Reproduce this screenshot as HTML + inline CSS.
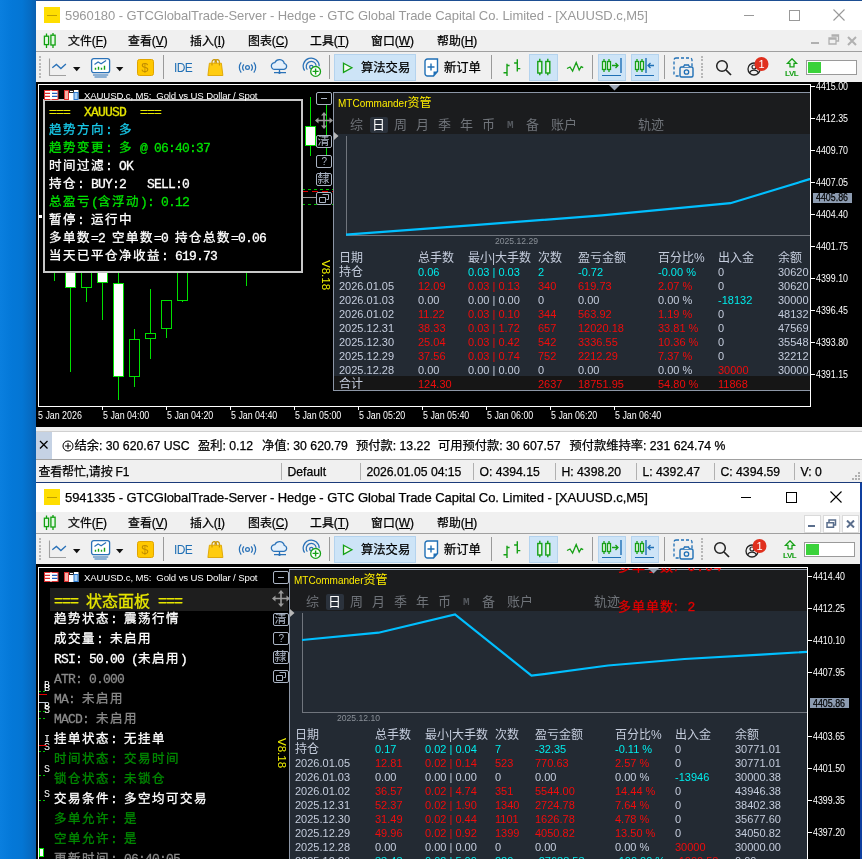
<!DOCTYPE html>
<html><head><meta charset="utf-8"><title>MT5</title>
<style>
html,body{margin:0;padding:0;background:#000;}
body{width:862px;height:859px;overflow:hidden;position:relative;}
#r{position:absolute;left:0;top:0;width:862px;height:859px;overflow:hidden;}
#r div,#r svg{position:absolute;box-sizing:content-box;}
#r span{position:static;}
.m span{line-height:0;}
#r{will-change:transform;}
.t{white-space:nowrap;}
.k{-webkit-text-stroke:0.25px currentColor;}
.m{-webkit-text-stroke:0.3px currentColor;}
.m{font-family:"Liberation Mono","Noto Sans CJK SC",monospace;}
.m .c{font-family:"Liberation Sans","Noto Sans CJK SC",sans-serif;}
.m .l{font-family:"Liberation Mono",monospace;}
u{text-decoration:underline;text-underline-offset:1px;}
</style></head><body><div id="r">
<div style="left:0;top:0;width:36px;height:859px;background:linear-gradient(90deg,#0a7fdf 0px,#0478d8 12px,#0476d4 22px,#066cc4 30px,#0a60b0 36px)"></div>
<div style="left:36px;top:0px;width:826px;height:1px;background:#1d4e92;"></div>
<div style="left:36px;top:1px;width:826px;height:29px;background:#fff;"></div>
<div style="left:44px;top:7px;width:16px;height:16px;background:#ffde00;"></div>
<div style="left:47px;top:14.5px;width:10px;height:1px;background:#c0a000;"></div>
<div class="t" style="left:65px;top:6.5px;height:18px;line-height:18px;font-size:13px;color:#999;font-family:'Liberation Sans','Noto Sans CJK SC',sans-serif;letter-spacing:-0.06px;">5960180 - GTCGlobalTrade-Server - Hedge - GTC Global Trade Capital Co. Limited - [XAUUSD.c,M5]</div>
<svg style="left:743px;top:9px" width="60" height="14"></svg>
<div style="left:744px;top:15px;width:10px;height:1px;background:#999;"></div>
<div style="left:789px;top:10px;width:9px;height:9px;border:1px solid #999"></div>
<svg style="left:833px;top:9px" width="12" height="12"><path d="M0.5 0.5L11.5 11.5M11.5 0.5L0.5 11.5" stroke="#999" stroke-width="1.1" fill="none"/></svg>
<div style="left:36px;top:30px;width:826px;height:22px;background:#f0f0f0;"></div>
<div style="left:36px;top:51px;width:826px;height:1px;background:#a0a0a0;"></div>
<svg style="left:41px;top:33px" width="18" height="16"><g stroke="#10a010" fill="#e4f8e4" stroke-width="1.3"><path d="M5.5 0.5v14.5M12 0v15" fill="none"/><rect x="3.4" y="3.2" width="4.2" height="8.4"/><rect x="9.9" y="2.2" width="4.2" height="9.8"/></g></svg>
<div class="t k" style="left:68px;top:32.5px;height:17px;line-height:17px;font-size:11.9px;color:#000;font-family:'Liberation Sans','Noto Sans CJK SC',sans-serif;">文件(<u>F</u>)</div>
<div class="t k" style="left:128px;top:32.5px;height:17px;line-height:17px;font-size:11.9px;color:#000;font-family:'Liberation Sans','Noto Sans CJK SC',sans-serif;">查看(<u>V</u>)</div>
<div class="t k" style="left:190px;top:32.5px;height:17px;line-height:17px;font-size:11.9px;color:#000;font-family:'Liberation Sans','Noto Sans CJK SC',sans-serif;">插入(<u>I</u>)</div>
<div class="t k" style="left:248px;top:32.5px;height:17px;line-height:17px;font-size:11.9px;color:#000;font-family:'Liberation Sans','Noto Sans CJK SC',sans-serif;">图表(<u>C</u>)</div>
<div class="t k" style="left:310px;top:32.5px;height:17px;line-height:17px;font-size:11.9px;color:#000;font-family:'Liberation Sans','Noto Sans CJK SC',sans-serif;">工具(<u>T</u>)</div>
<div class="t k" style="left:371px;top:32.5px;height:17px;line-height:17px;font-size:11.9px;color:#000;font-family:'Liberation Sans','Noto Sans CJK SC',sans-serif;">窗口(<u>W</u>)</div>
<div class="t k" style="left:437px;top:32.5px;height:17px;line-height:17px;font-size:11.9px;color:#000;font-family:'Liberation Sans','Noto Sans CJK SC',sans-serif;">帮助(<u>H</u>)</div>
<div style="left:811px;top:42px;width:8px;height:2px;background:#b0b0b0;"></div>
<svg style="left:828px;top:34px" width="12" height="12"><path d="M3.5 1h7v6h-2M1 4h7v6h-7z M1 5h7 M3.5 2h7" stroke="#b0b0b0" stroke-width="1.3" fill="none"/></svg>
<svg style="left:847px;top:36px" width="10" height="10"><path d="M1 1L9 9M9 1L1 9" stroke="#b0b0b0" stroke-width="2" fill="none"/></svg>
<div style="left:36px;top:52px;width:826px;height:30px;background:#f0f0f0;"></div>
<div style="left:39px;top:56.0px;width:2px;height:2px;background:#b8b8b8;"></div>
<div style="left:39px;top:59.3px;width:2px;height:2px;background:#b8b8b8;"></div>
<div style="left:39px;top:62.6px;width:2px;height:2px;background:#b8b8b8;"></div>
<div style="left:39px;top:65.9px;width:2px;height:2px;background:#b8b8b8;"></div>
<div style="left:39px;top:69.2px;width:2px;height:2px;background:#b8b8b8;"></div>
<div style="left:39px;top:72.5px;width:2px;height:2px;background:#b8b8b8;"></div>
<div style="left:39px;top:75.8px;width:2px;height:2px;background:#b8b8b8;"></div>
<svg style="left:48px;top:57px" width="22" height="21"><path d="M1.5 1.5v17h16.5" stroke="#a0a0a0" stroke-width="1.1" fill="none"/><path d="M4.3 10.8l4.1-3.4 4.5 4.2 5-4.6" stroke="#2a72b8" stroke-width="1.3" fill="none"/></svg>
<svg style="left:73px;top:66.5px" width="8" height="5"><path d="M0 0h7.4l-3.7 4.2z" fill="#111"/></svg>
<svg style="left:90px;top:57px" width="22" height="21"><rect x="1.6" y="1.6" width="18" height="14" rx="2.2" fill="#fff" stroke="#2a72b8" stroke-width="1.3"/><path d="M3 18h15.2M4.5 20h12.2" stroke="#2a72b8" stroke-width="1.1"/><path d="M4.5 7.6l3.6-2.6 3 1.8 5-3.2" stroke="#2a72b8" stroke-width="1.2" fill="none"/><path d="M5.5 12.8v-2M8.5 12.8v-3M11.5 12.8v-2M14.5 12.8v-4" stroke="#16a016" stroke-width="1.4"/></svg>
<svg style="left:116px;top:66.5px" width="8" height="5"><path d="M0 0h7.4l-3.7 4.2z" fill="#111"/></svg>
<div style="left:137px;top:59px;width:15px;height:15px;background:#ffc800;border:1px solid #e0a400;border-radius:2.5px"></div>
<div class="t" style="left:141.2px;top:58.8px;height:18px;line-height:18px;font-size:13px;color:#c08c00;font-family:'Liberation Sans','Noto Sans CJK SC',sans-serif;">$</div>
<div style="left:163px;top:55px;width:1px;height:24px;background:#9a9a9a;"></div>
<div class="t" style="left:174px;top:59.5px;height:17px;line-height:17px;font-size:12px;color:#1f6fb5;font-family:'Liberation Sans','Noto Sans CJK SC',sans-serif;letter-spacing:-0.6px;">IDE</div>
<svg style="left:206px;top:57px" width="20" height="20"><path d="M6 8.5V5.2a2.2 2.6 0 0 1 4.4 0v3M9 8.5V5.2a2.2 2.6 0 0 1 4.4 0v3" stroke="#c89400" stroke-width="1.1" fill="none"/><path d="M3.4 6.2h12l1.5 12.3h-15z" fill="#ffcc10" stroke="#dca400" stroke-width="0.9"/><path d="M6 6.5v2M13.4 6.5v2" stroke="#c89400" stroke-width="1.1"/></svg>
<svg style="left:237px;top:59px" width="22" height="16"><g stroke="#2a72b8" stroke-width="1.25" fill="none"><circle cx="10.5" cy="8.5" r="1.9"/><path d="M6.9 5.3a5 5 0 0 0 0 6.4M14.1 5.3a5 5 0 0 1 0 6.4M4.2 3.4a8 8 0 0 0 0 10.2M16.8 3.4a8 8 0 0 1 0 10.2"/></g></svg>
<svg style="left:269px;top:57px" width="22" height="20"><g stroke="#2a72b8" stroke-width="1.25" fill="#e4f0fb"><path d="M5.6 12.4a3.4 3.4 0 0 1 .3-6.8 5 5 0 0 1 9.4 .9 3 3 0 0 1 -.3 5.9z"/><path d="M10.5 12.4v3.3M5 15.7h12" fill="none"/></g><circle cx="10.5" cy="15.7" r="1.2" fill="#2a72b8"/></svg>
<svg style="left:301px;top:57px" width="23" height="22"><g stroke="#2a72b8" stroke-width="1.25" fill="none"><path d="M3.6 13.6a8 8 0 1 1 14.6-4.4"/><path d="M6.4 12.6a5 5 0 1 1 8.8-3.8"/><circle cx="10.3" cy="10" r="1.7"/></g><circle cx="14.6" cy="14.4" r="4.9" fill="#fff" stroke="#16a016" stroke-width="1.3"/><path d="M14.6 11.4v6M11.6 14.4h6" stroke="#16a016" stroke-width="1.4"/></svg>
<div style="left:329px;top:55px;width:1px;height:24px;background:#9a9a9a;"></div>
<div style="left:334px;top:54px;width:80px;height:25px;background:#cde4f7;border:1px solid #b4d3ee"></div>
<svg style="left:342px;top:62px" width="12" height="12"><path d="M1.5 1.2l8.4 4.6-8.4 4.6z" fill="#f4fbf4" stroke="#16a016" stroke-width="1.3"/></svg>
<div class="t k" style="left:361px;top:60.3px;height:17px;line-height:17px;font-size:12.3px;color:#000;font-family:'Liberation Sans','Noto Sans CJK SC',sans-serif;">算法交易</div>
<svg style="left:424px;top:58px" width="15" height="19"><path d="M3.5 1h10v12.5l-4 4.5h-6a2.5 2.5 0 0 1 -2.5-2.5v-12a2.5 2.5 0 0 1 2.5-2.5z" fill="#fff" stroke="#1f6fb5" stroke-width="1.4"/><path d="M13.5 13.5l-4 4.5v-4.5z" fill="#1f6fb5"/><path d="M7 5.5v7M3.5 9h7" stroke="#1f6fb5" stroke-width="1.4"/></svg>
<div class="t k" style="left:444px;top:60.3px;height:17px;line-height:17px;font-size:12.3px;color:#000;font-family:'Liberation Sans','Noto Sans CJK SC',sans-serif;">新订单</div>
<div style="left:491px;top:55px;width:1px;height:24px;background:#9a9a9a;"></div>
<svg style="left:502px;top:58px" width="20" height="20"><path d="M5 5.7v12.2M1.5 14.7h3.5M5 7.5h2.6M15.3 1.3v12.2M15.3 5h-3.2M15.3 10.6h3" stroke="#16a016" stroke-width="1.4" fill="none"/></svg>
<div style="left:529px;top:54px;width:27px;height:25px;background:#cde4f7;border:1px solid #b4d3ee"></div>
<svg style="left:534px;top:58px" width="18" height="18"><g stroke="#16a016" stroke-width="1.4" fill="#e8f8e8"><path d="M5.8 0.8v16.4M13.8 0.8v16.4" fill="none"/><rect x="3.8" y="3.5" width="4" height="11.5"/><rect x="11.8" y="3.5" width="4" height="11.5"/></g></svg>
<svg style="left:566px;top:61px" width="18" height="12"><path d="M1 7.5l3-1.5 2.6 4 3.6-8.5 3 7.5 2-3.3 2 1" stroke="#16a016" stroke-width="1.3" fill="none"/></svg>
<div style="left:592px;top:55px;width:1px;height:24px;background:#9a9a9a;"></div>
<div style="left:598px;top:54px;width:26px;height:25px;background:#cde4f7;border:1px solid #b4d3ee"></div>
<svg style="left:601px;top:58px" width="22" height="20"><g stroke="#16a016" stroke-width="1.3" fill="#e8f8e8"><path d="M3 1v13M8 1v13" fill="none"/><rect x="1.5" y="3.5" width="3" height="8"/><rect x="6.5" y="3.5" width="3" height="8"/></g><path d="M11 7.5h6M14.5 5l2.5 2.5-2.5 2.5" stroke="#16a016" stroke-width="1.3" fill="none"/><path d="M20 0v15" stroke="#1f6fb5" stroke-width="1.4"/><path d="M1 17.5h19" stroke="#1f6fb5" stroke-width="1"/></svg>
<div style="left:631px;top:54px;width:26px;height:25px;background:#cde4f7;border:1px solid #b4d3ee"></div>
<svg style="left:634px;top:58px" width="22" height="20"><g stroke="#16a016" stroke-width="1.3" fill="#e8f8e8"><path d="M3 1v13M8 1v13" fill="none"/><rect x="1.5" y="3.5" width="3" height="8"/><rect x="6.5" y="3.5" width="3" height="8"/></g><path d="M12 0v15" stroke="#1f6fb5" stroke-width="1.4"/><path d="M20 7.5h-6M16.5 5l-2.5 2.5 2.5 2.5" stroke="#1f6fb5" stroke-width="1.3" fill="none"/><path d="M1 17.5h19" stroke="#1f6fb5" stroke-width="1"/></svg>
<div style="left:664px;top:55px;width:1px;height:24px;background:#9a9a9a;"></div>
<svg style="left:673px;top:57px" width="22" height="22"><rect x="1" y="1" width="18" height="18" rx="2" fill="none" stroke="#1f6fb5" stroke-width="1.3" stroke-dasharray="3 2"/><rect x="7" y="10" width="13" height="10" rx="1.5" fill="#f0f0f0" stroke="#1f6fb5" stroke-width="1.4"/><path d="M10.5 10l1-2h4l1 2" stroke="#1f6fb5" stroke-width="1.3" fill="#f0f0f0"/><circle cx="13.5" cy="15" r="2.2" fill="none" stroke="#1f6fb5" stroke-width="1.3"/></svg>
<div style="left:701px;top:56.0px;width:2px;height:2px;background:#b8b8b8;"></div>
<div style="left:701px;top:59.3px;width:2px;height:2px;background:#b8b8b8;"></div>
<div style="left:701px;top:62.6px;width:2px;height:2px;background:#b8b8b8;"></div>
<div style="left:701px;top:65.9px;width:2px;height:2px;background:#b8b8b8;"></div>
<div style="left:701px;top:69.2px;width:2px;height:2px;background:#b8b8b8;"></div>
<div style="left:701px;top:72.5px;width:2px;height:2px;background:#b8b8b8;"></div>
<div style="left:701px;top:75.8px;width:2px;height:2px;background:#b8b8b8;"></div>
<svg style="left:715px;top:59px" width="18" height="18"><circle cx="7" cy="7" r="5.3" fill="none" stroke="#222" stroke-width="1.5"/><path d="M11 11l5 5" stroke="#222" stroke-width="1.7"/></svg>
<svg style="left:746px;top:57px" width="26" height="22"><circle cx="8" cy="12" r="6" fill="none" stroke="#222" stroke-width="1.3"/><circle cx="8" cy="10" r="2" fill="none" stroke="#222" stroke-width="1.2"/><path d="M3.5 16a5 5 0 0 1 9 0" fill="none" stroke="#222" stroke-width="1.2"/><circle cx="15.5" cy="7" r="7" fill="#e0301e"/></svg>
<div class="t" style="left:758.5px;top:56.5px;height:15px;line-height:15px;font-size:11px;color:#fff;font-family:'Liberation Sans','Noto Sans CJK SC',sans-serif;">1</div>
<svg style="left:785px;top:58px" width="14" height="10"><path d="M7 0.8l4.5 4.5h-2.5v3.5h-4v-3.5h-2.5z" fill="#e8f8e8" stroke="#16a016" stroke-width="1.3"/></svg>
<div class="t" style="left:785px;top:67.5px;height:11px;line-height:11px;font-size:8px;color:#16a016;font-family:'Liberation Sans','Noto Sans CJK SC',sans-serif;font-weight:bold;letter-spacing:-0.4px;">LVL</div>
<div style="left:806px;top:60px;width:49px;height:13px;background:#fff;border:1px solid #9a9a9a"></div>
<div style="left:808px;top:62px;width:13px;height:11px;background:#3ad23a;"></div>
<div style="left:36px;top:82px;width:826px;height:345px;background:#000;"></div>
<div style="left:38px;top:84px;width:773px;height:1px;background:#fff;"></div>
<div style="left:38px;top:84px;width:1px;height:323px;background:#fff;"></div>
<div style="left:38px;top:406px;width:773px;height:1px;background:#fff;"></div>
<div style="left:810px;top:84px;width:1px;height:323px;background:#fff;"></div>
<div style="left:39px;top:215px;width:3px;height:3px;background:#fff;"></div>
<div style="left:54px;top:272px;width:1px;height:9px;background:#00e000;"></div>
<div style="left:70px;top:250px;width:1px;height:122px;background:#00e000;"></div>
<div style="left:65px;top:250px;width:9px;height:36px;background:#fff;border:1px solid #00e000"></div>
<div style="left:86px;top:250px;width:1px;height:52px;background:#00e000;"></div>
<div style="left:81px;top:250px;width:9px;height:36px;background:#000;border:1px solid #00e000"></div>
<div style="left:102px;top:250px;width:1px;height:70px;background:#00e000;"></div>
<div style="left:97px;top:250px;width:9px;height:31px;background:#fff;border:1px solid #00e000"></div>
<div style="left:118px;top:265px;width:1px;height:135px;background:#00e000;"></div>
<div style="left:113px;top:283px;width:9px;height:92px;background:#fff;border:1px solid #00e000"></div>
<div style="left:134px;top:329px;width:1px;height:58px;background:#00e000;"></div>
<div style="left:129px;top:339px;width:9px;height:36px;background:#000;border:1px solid #00e000"></div>
<div style="left:150px;top:289px;width:1px;height:70px;background:#00e000;"></div>
<div style="left:145px;top:333px;width:9px;height:4px;background:#000;border:1px solid #00e000"></div>
<div style="left:166px;top:300px;width:1px;height:38px;background:#00e000;"></div>
<div style="left:161px;top:300px;width:9px;height:27px;background:#000;border:1px solid #00e000"></div>
<div style="left:182px;top:250px;width:1px;height:52px;background:#00e000;"></div>
<div style="left:177px;top:250px;width:9px;height:49px;background:#000;border:1px solid #00e000"></div>
<div style="left:246px;top:270px;width:1px;height:16px;background:#00e000;"></div>
<div style="left:310px;top:97px;width:1px;height:59px;background:#00e000;"></div>
<div style="left:305px;top:126px;width:9px;height:18px;background:#fff;border:1px solid #00e000"></div>
<div style="left:326px;top:97px;width:1px;height:58px;background:#00e000;"></div>
<svg style="left:302px;top:186px" width="32" height="22"><path d="M0 3.5h32M0 18.5h32" stroke="#00c000" stroke-dasharray="3 3"/><path d="M0 5.5h32" stroke="#e00000" stroke-dasharray="6 4"/><path d="M0 11.5h14" stroke="#9a9a9a"/></svg>
<div style="left:43px;top:99px;width:256px;height:170px;background:#000;border:2px solid #c8c8c8"></div>
<div class="t m" style="left:49px;top:104.0px;height:18px;line-height:18px;font-size:13px;color:#e6e600;"><span class="l" style="letter-spacing:-0.8px">===&nbsp;&nbsp;XAUUSD&nbsp;&nbsp;===</span></div>
<div class="t m" style="left:49px;top:122.0px;height:18px;line-height:18px;font-size:13px;color:#18c8e8;"><span class="c" style="font-size:12.5px;letter-spacing:1.5px">趋势方向</span><span class="l" style="letter-spacing:-0.8px">:&nbsp;</span><span class="c" style="font-size:12.5px;letter-spacing:1.5px">多</span></div>
<div class="t m" style="left:49px;top:140.0px;height:18px;line-height:18px;font-size:13px;color:#00e000;"><span class="c" style="font-size:12.5px;letter-spacing:1.5px">趋势变更</span><span class="l" style="letter-spacing:-0.8px">:&nbsp;</span><span class="c" style="font-size:12.5px;letter-spacing:1.5px">多</span><span class="l" style="letter-spacing:-0.8px">&nbsp;@&nbsp;06:40:37</span></div>
<div class="t m" style="left:49px;top:158.0px;height:18px;line-height:18px;font-size:13px;color:#fff;"><span class="c" style="font-size:12.5px;letter-spacing:1.5px">时间过滤</span><span class="l" style="letter-spacing:-0.8px">:&nbsp;OK</span></div>
<div class="t m" style="left:49px;top:176.0px;height:18px;line-height:18px;font-size:13px;color:#fff;"><span class="c" style="font-size:12.5px;letter-spacing:1.5px">持仓</span><span class="l" style="letter-spacing:-0.8px">:&nbsp;BUY:2&nbsp;&nbsp;&nbsp;SELL:0</span></div>
<div class="t m" style="left:49px;top:194.0px;height:18px;line-height:18px;font-size:13px;color:#00e000;"><span class="c" style="font-size:12.5px;letter-spacing:1.5px">总盈亏</span><span class="l" style="letter-spacing:-0.8px">(</span><span class="c" style="font-size:12.5px;letter-spacing:1.5px">含浮动</span><span class="l" style="letter-spacing:-0.8px">):&nbsp;0.12</span></div>
<div class="t m" style="left:49px;top:212.0px;height:18px;line-height:18px;font-size:13px;color:#fff;"><span class="c" style="font-size:12.5px;letter-spacing:1.5px">暂停</span><span class="l" style="letter-spacing:-0.8px">:&nbsp;</span><span class="c" style="font-size:12.5px;letter-spacing:1.5px">运行中</span></div>
<div class="t m" style="left:49px;top:230.0px;height:18px;line-height:18px;font-size:13px;color:#fff;"><span class="c" style="font-size:12.5px;letter-spacing:1.5px">多单数</span><span class="l" style="letter-spacing:-0.8px">=2&nbsp;</span><span class="c" style="font-size:12.5px;letter-spacing:1.5px">空单数</span><span class="l" style="letter-spacing:-0.8px">=0&nbsp;</span><span class="c" style="font-size:12.5px;letter-spacing:1.5px">持仓总数</span><span class="l" style="letter-spacing:-0.8px">=0.06</span></div>
<div class="t m" style="left:49px;top:248.0px;height:18px;line-height:18px;font-size:13px;color:#fff;"><span class="c" style="font-size:12.5px;letter-spacing:1.5px">当天已平仓净收益</span><span class="l" style="letter-spacing:-0.8px">:&nbsp;619.73</span></div>
<svg style="left:44px;top:90.4px" width="36" height="10"><rect x="0.5" y="0.5" width="13.5" height="9" fill="#fff" stroke="#e03030"/><path d="M1 3.3h5M1 6.3h5" stroke="#e03030" stroke-width="1.3"/><path d="M8 3.3h5.5M8 6.3h5.5" stroke="#2060c0" stroke-width="1.3"/><path d="M7 0v10" stroke="#fff"/><rect x="20" y="0" width="14.5" height="10" fill="#fff"/><rect x="20.5" y="0.5" width="4" height="9" fill="#f4b0a8" stroke="#e03030"/><rect x="25" y="0" width="5" height="3" fill="#222"/><rect x="26" y="1" width="3" height="1" fill="#fff"/><rect x="30" y="2.5" width="4" height="7" fill="#a8d0f4" stroke="#2878d0"/></svg>
<div class="t" style="left:84px;top:88.9px;height:13px;line-height:13px;font-size:9.6px;color:#fff;font-family:'Liberation Sans','Noto Sans CJK SC',sans-serif;letter-spacing:-0.12px;">XAUUSD.c, M5:&nbsp; Gold vs US Dollar / Spot</div>
<div style="left:316px;top:92px;width:14px;height:11px;border:1px solid #aab4c4;border-radius:2px;background:#000"></div>
<div style="left:321px;top:98px;width:6px;height:1px;background:#aab4c4;"></div>
<svg style="left:315px;top:112px" width="18" height="17"><path d="M9 1v15M1.5 8.5h15" stroke="#9a9a9a" stroke-width="1.6"/><path d="M9 0l3 3.5h-6zM9 17l3-3.5h-6zM0 8.5l3.5-3v6zM18 8.5l-3.5-3v6z" fill="#9a9a9a"/></svg>
<div style="left:316px;top:135px;width:14px;height:11px;border:1px solid #aab4c4;border-radius:2px;background:#000"></div>
<div class="t" style="left:317.5px;top:135.0px;height:13px;line-height:13px;font-size:12px;color:#aab4c4;font-family:'Liberation Sans','Noto Sans CJK SC',sans-serif;transform:scaleY(0.95);">清</div>
<div style="left:316px;top:155px;width:14px;height:11px;border:1px solid #aab4c4;border-radius:2px;background:#000"></div>
<div class="t" style="left:321.5px;top:155.0px;height:13px;line-height:13px;font-size:10px;color:#aab4c4;font-family:'Liberation Sans','Noto Sans CJK SC',sans-serif;">?</div>
<div style="left:316px;top:173px;width:14px;height:11px;border:1px solid #aab4c4;border-radius:2px;background:#000"></div>
<div class="t" style="left:317.5px;top:173.0px;height:13px;line-height:13px;font-size:12px;color:#aab4c4;font-family:'Liberation Sans','Noto Sans CJK SC',sans-serif;">隸</div>
<div style="left:316px;top:192px;width:14px;height:11px;border:1px solid #aab4c4;border-radius:2px;background:#000"></div>
<svg style="left:319px;top:194px" width="11" height="9"><path d="M3.5 0.5h6v5h-2M0.5 3.5h6v5h-6z" stroke="#aab4c4" fill="none"/></svg>
<div class="t" style="left:319.5px;top:260px;width:34px;height:12px;line-height:12px;font-size:11.5px;color:#f0f000;font-family:'Liberation Sans','Noto Sans CJK SC',sans-serif;transform-origin:0 0;transform:translate(12px,0) rotate(90deg)">V8.18</div>
<div style="left:333px;top:92px;width:477px;height:314px;overflow:hidden;background:#232a33">
<div style="left:0;top:0;width:477px;height:42px;background:#1b1c1e"></div>
<div style="left:0;top:0;width:477px;height:1px;background:#8c96a6"></div>
<div style="left:0;top:0;width:1px;height:314px;background:#8c96a6"></div>
<div class="t" style="left:5px;top:3px;height:16px;line-height:16px;font-size:10px;color:#ffee00;font-family:'Liberation Sans','Noto Sans CJK SC',sans-serif">MTCommander<span style="font-size:12px">资管</span></div>
<div class="t" style="left:17px;top:24px;height:18px;line-height:18px;font-size:13px;color:#6f7379;font-family:'Liberation Sans','Noto Sans CJK SC',sans-serif;">综</div>
<div style="left:37px;top:25px;width:18px;height:16px;background:#2b323c;border-radius:2px"></div>
<div class="t" style="left:39px;top:24px;height:18px;line-height:18px;font-size:13px;color:#fff;font-family:'Liberation Sans','Noto Sans CJK SC',sans-serif;">日</div>
<div class="t" style="left:61px;top:24px;height:18px;line-height:18px;font-size:13px;color:#6f7379;font-family:'Liberation Sans','Noto Sans CJK SC',sans-serif;">周</div>
<div class="t" style="left:83px;top:24px;height:18px;line-height:18px;font-size:13px;color:#6f7379;font-family:'Liberation Sans','Noto Sans CJK SC',sans-serif;">月</div>
<div class="t" style="left:105px;top:24px;height:18px;line-height:18px;font-size:13px;color:#6f7379;font-family:'Liberation Sans','Noto Sans CJK SC',sans-serif;">季</div>
<div class="t" style="left:127px;top:24px;height:18px;line-height:18px;font-size:13px;color:#6f7379;font-family:'Liberation Sans','Noto Sans CJK SC',sans-serif;">年</div>
<div class="t" style="left:149px;top:24px;height:18px;line-height:18px;font-size:13px;color:#6f7379;font-family:'Liberation Sans','Noto Sans CJK SC',sans-serif;">币</div>
<div class="t" style="left:174px;top:24px;height:18px;line-height:18px;font-size:11px;color:#54585e;font-family:'Liberation Mono','Noto Sans CJK SC',monospace;font-weight:bold;">M</div>
<div class="t" style="left:193px;top:24px;height:18px;line-height:18px;font-size:13px;color:#6f7379;font-family:'Liberation Sans','Noto Sans CJK SC',sans-serif;">备</div>
<div class="t" style="left:218px;top:24px;height:18px;line-height:18px;font-size:13px;color:#6f7379;font-family:'Liberation Sans','Noto Sans CJK SC',sans-serif">账户</div>
<div class="t" style="left:305px;top:24px;height:18px;line-height:18px;font-size:13px;color:#6f7379;font-family:'Liberation Sans','Noto Sans CJK SC',sans-serif">轨迹</div>
<svg style="left:1px;top:40px" width="5" height="8"><path d="M0 0l4.5 4-4.5 4z" fill="#b8b8b8"/></svg>
<div style="left:13px;top:44px;width:1px;height:99px;background:#70757d"></div>
<div style="left:13px;top:143px;width:477px;height:1px;background:#70757d"></div>
<svg style="left:0;top:0" width="477" height="314"><polyline points="13,142.6 141,133.2 269,123.4 397.4,111.19999999999999 525,72.4" fill="none" stroke="#00bfff" stroke-width="2.2" stroke-linejoin="miter"/></svg>
<div class="t" style="left:162px;top:144px;height:11px;line-height:11px;font-size:8.6px;color:#8a9098;font-family:'Liberation Sans','Noto Sans CJK SC',sans-serif">2025.12.29</div>
<div class="t" style="left:6px;top:158px;height:16px;line-height:16px;font-size:12px;color:#c4ccdc;font-family:'Liberation Sans','Noto Sans CJK SC',sans-serif">日期</div>
<div class="t" style="left:85px;top:158px;height:16px;line-height:16px;font-size:12px;color:#c4ccdc;font-family:'Liberation Sans','Noto Sans CJK SC',sans-serif">总手数</div>
<div class="t" style="left:135px;top:158px;height:16px;line-height:16px;font-size:12px;color:#c4ccdc;font-family:'Liberation Sans','Noto Sans CJK SC',sans-serif">最小|大手数</div>
<div class="t" style="left:205px;top:158px;height:16px;line-height:16px;font-size:12px;color:#c4ccdc;font-family:'Liberation Sans','Noto Sans CJK SC',sans-serif">次数</div>
<div class="t" style="left:245px;top:158px;height:16px;line-height:16px;font-size:12px;color:#c4ccdc;font-family:'Liberation Sans','Noto Sans CJK SC',sans-serif">盈亏金额</div>
<div class="t" style="left:325px;top:158px;height:16px;line-height:16px;font-size:12px;color:#c4ccdc;font-family:'Liberation Sans','Noto Sans CJK SC',sans-serif">百分比%</div>
<div class="t" style="left:385px;top:158px;height:16px;line-height:16px;font-size:12px;color:#c4ccdc;font-family:'Liberation Sans','Noto Sans CJK SC',sans-serif">出入金</div>
<div class="t" style="left:445px;top:158px;height:16px;line-height:16px;font-size:12px;color:#c4ccdc;font-family:'Liberation Sans','Noto Sans CJK SC',sans-serif">余额</div>
<div class="t" style="left:6px;top:173px;height:14px;line-height:14px;font-size:12px;color:#c4ccdc;font-family:'Liberation Sans','Noto Sans CJK SC',sans-serif">持仓</div>
<div class="t" style="left:85px;top:173px;height:14px;line-height:14px;font-size:11px;color:#00ecec;font-family:'Liberation Sans','Noto Sans CJK SC',sans-serif">0.06</div>
<div class="t" style="left:135px;top:173px;height:14px;line-height:14px;font-size:11px;color:#00ecec;font-family:'Liberation Sans','Noto Sans CJK SC',sans-serif">0.03 | 0.03</div>
<div class="t" style="left:205px;top:173px;height:14px;line-height:14px;font-size:11px;color:#00ecec;font-family:'Liberation Sans','Noto Sans CJK SC',sans-serif">2</div>
<div class="t" style="left:245px;top:173px;height:14px;line-height:14px;font-size:11px;color:#00ecec;font-family:'Liberation Sans','Noto Sans CJK SC',sans-serif">-0.72</div>
<div class="t" style="left:325px;top:173px;height:14px;line-height:14px;font-size:11px;color:#00ecec;font-family:'Liberation Sans','Noto Sans CJK SC',sans-serif">-0.00 %</div>
<div class="t" style="left:385px;top:173px;height:14px;line-height:14px;font-size:11px;color:#c4ccdc;font-family:'Liberation Sans','Noto Sans CJK SC',sans-serif">0</div>
<div class="t" style="left:445px;top:173px;height:14px;line-height:14px;font-size:11px;color:#c4ccdc;font-family:'Liberation Sans','Noto Sans CJK SC',sans-serif">30620</div>
<div class="t" style="left:6px;top:187px;height:14px;line-height:14px;font-size:11px;color:#c4ccdc;font-family:'Liberation Sans','Noto Sans CJK SC',sans-serif">2026.01.05</div>
<div class="t" style="left:85px;top:187px;height:14px;line-height:14px;font-size:11px;color:#f00c0c;font-family:'Liberation Sans','Noto Sans CJK SC',sans-serif">12.09</div>
<div class="t" style="left:135px;top:187px;height:14px;line-height:14px;font-size:11px;color:#f00c0c;font-family:'Liberation Sans','Noto Sans CJK SC',sans-serif">0.03 | 0.13</div>
<div class="t" style="left:205px;top:187px;height:14px;line-height:14px;font-size:11px;color:#f00c0c;font-family:'Liberation Sans','Noto Sans CJK SC',sans-serif">340</div>
<div class="t" style="left:245px;top:187px;height:14px;line-height:14px;font-size:11px;color:#f00c0c;font-family:'Liberation Sans','Noto Sans CJK SC',sans-serif">619.73</div>
<div class="t" style="left:325px;top:187px;height:14px;line-height:14px;font-size:11px;color:#f00c0c;font-family:'Liberation Sans','Noto Sans CJK SC',sans-serif">2.07 %</div>
<div class="t" style="left:385px;top:187px;height:14px;line-height:14px;font-size:11px;color:#c4ccdc;font-family:'Liberation Sans','Noto Sans CJK SC',sans-serif">0</div>
<div class="t" style="left:445px;top:187px;height:14px;line-height:14px;font-size:11px;color:#c4ccdc;font-family:'Liberation Sans','Noto Sans CJK SC',sans-serif">30620</div>
<div class="t" style="left:6px;top:201px;height:14px;line-height:14px;font-size:11px;color:#c4ccdc;font-family:'Liberation Sans','Noto Sans CJK SC',sans-serif">2026.01.03</div>
<div class="t" style="left:85px;top:201px;height:14px;line-height:14px;font-size:11px;color:#c4ccdc;font-family:'Liberation Sans','Noto Sans CJK SC',sans-serif">0.00</div>
<div class="t" style="left:135px;top:201px;height:14px;line-height:14px;font-size:11px;color:#c4ccdc;font-family:'Liberation Sans','Noto Sans CJK SC',sans-serif">0.00 | 0.00</div>
<div class="t" style="left:205px;top:201px;height:14px;line-height:14px;font-size:11px;color:#c4ccdc;font-family:'Liberation Sans','Noto Sans CJK SC',sans-serif">0</div>
<div class="t" style="left:245px;top:201px;height:14px;line-height:14px;font-size:11px;color:#c4ccdc;font-family:'Liberation Sans','Noto Sans CJK SC',sans-serif">0.00</div>
<div class="t" style="left:325px;top:201px;height:14px;line-height:14px;font-size:11px;color:#c4ccdc;font-family:'Liberation Sans','Noto Sans CJK SC',sans-serif">0.00 %</div>
<div class="t" style="left:385px;top:201px;height:14px;line-height:14px;font-size:11px;color:#00ecec;font-family:'Liberation Sans','Noto Sans CJK SC',sans-serif">-18132</div>
<div class="t" style="left:445px;top:201px;height:14px;line-height:14px;font-size:11px;color:#c4ccdc;font-family:'Liberation Sans','Noto Sans CJK SC',sans-serif">30000</div>
<div class="t" style="left:6px;top:215px;height:14px;line-height:14px;font-size:11px;color:#c4ccdc;font-family:'Liberation Sans','Noto Sans CJK SC',sans-serif">2026.01.02</div>
<div class="t" style="left:85px;top:215px;height:14px;line-height:14px;font-size:11px;color:#f00c0c;font-family:'Liberation Sans','Noto Sans CJK SC',sans-serif">11.22</div>
<div class="t" style="left:135px;top:215px;height:14px;line-height:14px;font-size:11px;color:#f00c0c;font-family:'Liberation Sans','Noto Sans CJK SC',sans-serif">0.03 | 0.10</div>
<div class="t" style="left:205px;top:215px;height:14px;line-height:14px;font-size:11px;color:#f00c0c;font-family:'Liberation Sans','Noto Sans CJK SC',sans-serif">344</div>
<div class="t" style="left:245px;top:215px;height:14px;line-height:14px;font-size:11px;color:#f00c0c;font-family:'Liberation Sans','Noto Sans CJK SC',sans-serif">563.92</div>
<div class="t" style="left:325px;top:215px;height:14px;line-height:14px;font-size:11px;color:#f00c0c;font-family:'Liberation Sans','Noto Sans CJK SC',sans-serif">1.19 %</div>
<div class="t" style="left:385px;top:215px;height:14px;line-height:14px;font-size:11px;color:#c4ccdc;font-family:'Liberation Sans','Noto Sans CJK SC',sans-serif">0</div>
<div class="t" style="left:445px;top:215px;height:14px;line-height:14px;font-size:11px;color:#c4ccdc;font-family:'Liberation Sans','Noto Sans CJK SC',sans-serif">48132</div>
<div class="t" style="left:6px;top:229px;height:14px;line-height:14px;font-size:11px;color:#c4ccdc;font-family:'Liberation Sans','Noto Sans CJK SC',sans-serif">2025.12.31</div>
<div class="t" style="left:85px;top:229px;height:14px;line-height:14px;font-size:11px;color:#f00c0c;font-family:'Liberation Sans','Noto Sans CJK SC',sans-serif">38.33</div>
<div class="t" style="left:135px;top:229px;height:14px;line-height:14px;font-size:11px;color:#f00c0c;font-family:'Liberation Sans','Noto Sans CJK SC',sans-serif">0.03 | 1.72</div>
<div class="t" style="left:205px;top:229px;height:14px;line-height:14px;font-size:11px;color:#f00c0c;font-family:'Liberation Sans','Noto Sans CJK SC',sans-serif">657</div>
<div class="t" style="left:245px;top:229px;height:14px;line-height:14px;font-size:11px;color:#f00c0c;font-family:'Liberation Sans','Noto Sans CJK SC',sans-serif">12020.18</div>
<div class="t" style="left:325px;top:229px;height:14px;line-height:14px;font-size:11px;color:#f00c0c;font-family:'Liberation Sans','Noto Sans CJK SC',sans-serif">33.81 %</div>
<div class="t" style="left:385px;top:229px;height:14px;line-height:14px;font-size:11px;color:#c4ccdc;font-family:'Liberation Sans','Noto Sans CJK SC',sans-serif">0</div>
<div class="t" style="left:445px;top:229px;height:14px;line-height:14px;font-size:11px;color:#c4ccdc;font-family:'Liberation Sans','Noto Sans CJK SC',sans-serif">47569</div>
<div class="t" style="left:6px;top:243px;height:14px;line-height:14px;font-size:11px;color:#c4ccdc;font-family:'Liberation Sans','Noto Sans CJK SC',sans-serif">2025.12.30</div>
<div class="t" style="left:85px;top:243px;height:14px;line-height:14px;font-size:11px;color:#f00c0c;font-family:'Liberation Sans','Noto Sans CJK SC',sans-serif">25.04</div>
<div class="t" style="left:135px;top:243px;height:14px;line-height:14px;font-size:11px;color:#f00c0c;font-family:'Liberation Sans','Noto Sans CJK SC',sans-serif">0.03 | 0.42</div>
<div class="t" style="left:205px;top:243px;height:14px;line-height:14px;font-size:11px;color:#f00c0c;font-family:'Liberation Sans','Noto Sans CJK SC',sans-serif">542</div>
<div class="t" style="left:245px;top:243px;height:14px;line-height:14px;font-size:11px;color:#f00c0c;font-family:'Liberation Sans','Noto Sans CJK SC',sans-serif">3336.55</div>
<div class="t" style="left:325px;top:243px;height:14px;line-height:14px;font-size:11px;color:#f00c0c;font-family:'Liberation Sans','Noto Sans CJK SC',sans-serif">10.36 %</div>
<div class="t" style="left:385px;top:243px;height:14px;line-height:14px;font-size:11px;color:#c4ccdc;font-family:'Liberation Sans','Noto Sans CJK SC',sans-serif">0</div>
<div class="t" style="left:445px;top:243px;height:14px;line-height:14px;font-size:11px;color:#c4ccdc;font-family:'Liberation Sans','Noto Sans CJK SC',sans-serif">35548</div>
<div class="t" style="left:6px;top:257px;height:14px;line-height:14px;font-size:11px;color:#c4ccdc;font-family:'Liberation Sans','Noto Sans CJK SC',sans-serif">2025.12.29</div>
<div class="t" style="left:85px;top:257px;height:14px;line-height:14px;font-size:11px;color:#f00c0c;font-family:'Liberation Sans','Noto Sans CJK SC',sans-serif">37.56</div>
<div class="t" style="left:135px;top:257px;height:14px;line-height:14px;font-size:11px;color:#f00c0c;font-family:'Liberation Sans','Noto Sans CJK SC',sans-serif">0.03 | 0.74</div>
<div class="t" style="left:205px;top:257px;height:14px;line-height:14px;font-size:11px;color:#f00c0c;font-family:'Liberation Sans','Noto Sans CJK SC',sans-serif">752</div>
<div class="t" style="left:245px;top:257px;height:14px;line-height:14px;font-size:11px;color:#f00c0c;font-family:'Liberation Sans','Noto Sans CJK SC',sans-serif">2212.29</div>
<div class="t" style="left:325px;top:257px;height:14px;line-height:14px;font-size:11px;color:#f00c0c;font-family:'Liberation Sans','Noto Sans CJK SC',sans-serif">7.37 %</div>
<div class="t" style="left:385px;top:257px;height:14px;line-height:14px;font-size:11px;color:#c4ccdc;font-family:'Liberation Sans','Noto Sans CJK SC',sans-serif">0</div>
<div class="t" style="left:445px;top:257px;height:14px;line-height:14px;font-size:11px;color:#c4ccdc;font-family:'Liberation Sans','Noto Sans CJK SC',sans-serif">32212</div>
<div class="t" style="left:6px;top:271px;height:14px;line-height:14px;font-size:11px;color:#c4ccdc;font-family:'Liberation Sans','Noto Sans CJK SC',sans-serif">2025.12.28</div>
<div class="t" style="left:85px;top:271px;height:14px;line-height:14px;font-size:11px;color:#c4ccdc;font-family:'Liberation Sans','Noto Sans CJK SC',sans-serif">0.00</div>
<div class="t" style="left:135px;top:271px;height:14px;line-height:14px;font-size:11px;color:#c4ccdc;font-family:'Liberation Sans','Noto Sans CJK SC',sans-serif">0.00 | 0.00</div>
<div class="t" style="left:205px;top:271px;height:14px;line-height:14px;font-size:11px;color:#c4ccdc;font-family:'Liberation Sans','Noto Sans CJK SC',sans-serif">0</div>
<div class="t" style="left:245px;top:271px;height:14px;line-height:14px;font-size:11px;color:#c4ccdc;font-family:'Liberation Sans','Noto Sans CJK SC',sans-serif">0.00</div>
<div class="t" style="left:325px;top:271px;height:14px;line-height:14px;font-size:11px;color:#c4ccdc;font-family:'Liberation Sans','Noto Sans CJK SC',sans-serif">0.00 %</div>
<div class="t" style="left:385px;top:271px;height:14px;line-height:14px;font-size:11px;color:#f00c0c;font-family:'Liberation Sans','Noto Sans CJK SC',sans-serif">30000</div>
<div class="t" style="left:445px;top:271px;height:14px;line-height:14px;font-size:11px;color:#c4ccdc;font-family:'Liberation Sans','Noto Sans CJK SC',sans-serif">30000</div>
<div style="left:1px;top:284px;width:477px;height:14px;background:#161616"></div>
<div style="left:0px;top:298px;width:477px;height:1px;background:#8c96a6"></div>
<div style="left:0px;top:299px;width:477px;height:40px;background:#000"></div>
<div class="t" style="left:6px;top:284.5px;height:14px;line-height:14px;font-size:12px;color:#c4ccdc;font-family:'Liberation Sans','Noto Sans CJK SC',sans-serif">合计</div>
<div class="t" style="left:85px;top:284.5px;height:14px;line-height:14px;font-size:11px;color:#f00c0c;font-family:'Liberation Sans','Noto Sans CJK SC',sans-serif">124.30</div>
<div class="t" style="left:205px;top:284.5px;height:14px;line-height:14px;font-size:11px;color:#f00c0c;font-family:'Liberation Sans','Noto Sans CJK SC',sans-serif">2637</div>
<div class="t" style="left:245px;top:284.5px;height:14px;line-height:14px;font-size:11px;color:#f00c0c;font-family:'Liberation Sans','Noto Sans CJK SC',sans-serif">18751.95</div>
<div class="t" style="left:325px;top:284.5px;height:14px;line-height:14px;font-size:11px;color:#f00c0c;font-family:'Liberation Sans','Noto Sans CJK SC',sans-serif">54.80 %</div>
<div class="t" style="left:385px;top:284.5px;height:14px;line-height:14px;font-size:11px;color:#f00c0c;font-family:'Liberation Sans','Noto Sans CJK SC',sans-serif">11868</div>
</div>
<div style="left:811px;top:86px;width:4px;height:1px;background:#fff;"></div>
<div class="t" style="left:816px;top:80.5px;height:12px;line-height:12px;font-size:10.3px;color:#fff;font-family:'Liberation Sans','Noto Sans CJK SC',sans-serif;letter-spacing:0px;transform-origin:0 50%;transform:scaleX(0.86);">4415.00</div>
<div style="left:811px;top:118px;width:4px;height:1px;background:#fff;"></div>
<div class="t" style="left:816px;top:112.5px;height:12px;line-height:12px;font-size:10.3px;color:#fff;font-family:'Liberation Sans','Noto Sans CJK SC',sans-serif;letter-spacing:0px;transform-origin:0 50%;transform:scaleX(0.86);">4412.35</div>
<div style="left:811px;top:150px;width:4px;height:1px;background:#fff;"></div>
<div class="t" style="left:816px;top:144.5px;height:12px;line-height:12px;font-size:10.3px;color:#fff;font-family:'Liberation Sans','Noto Sans CJK SC',sans-serif;letter-spacing:0px;transform-origin:0 50%;transform:scaleX(0.86);">4409.70</div>
<div style="left:811px;top:182px;width:4px;height:1px;background:#fff;"></div>
<div class="t" style="left:816px;top:176.5px;height:12px;line-height:12px;font-size:10.3px;color:#fff;font-family:'Liberation Sans','Noto Sans CJK SC',sans-serif;letter-spacing:0px;transform-origin:0 50%;transform:scaleX(0.86);">4407.05</div>
<div style="left:811px;top:214px;width:4px;height:1px;background:#fff;"></div>
<div class="t" style="left:816px;top:208.5px;height:12px;line-height:12px;font-size:10.3px;color:#fff;font-family:'Liberation Sans','Noto Sans CJK SC',sans-serif;letter-spacing:0px;transform-origin:0 50%;transform:scaleX(0.86);">4404.40</div>
<div style="left:811px;top:246px;width:4px;height:1px;background:#fff;"></div>
<div class="t" style="left:816px;top:240.5px;height:12px;line-height:12px;font-size:10.3px;color:#fff;font-family:'Liberation Sans','Noto Sans CJK SC',sans-serif;letter-spacing:0px;transform-origin:0 50%;transform:scaleX(0.86);">4401.75</div>
<div style="left:811px;top:278px;width:4px;height:1px;background:#fff;"></div>
<div class="t" style="left:816px;top:272.5px;height:12px;line-height:12px;font-size:10.3px;color:#fff;font-family:'Liberation Sans','Noto Sans CJK SC',sans-serif;letter-spacing:0px;transform-origin:0 50%;transform:scaleX(0.86);">4399.10</div>
<div style="left:811px;top:310px;width:4px;height:1px;background:#fff;"></div>
<div class="t" style="left:816px;top:304.5px;height:12px;line-height:12px;font-size:10.3px;color:#fff;font-family:'Liberation Sans','Noto Sans CJK SC',sans-serif;letter-spacing:0px;transform-origin:0 50%;transform:scaleX(0.86);">4396.45</div>
<div style="left:811px;top:342px;width:4px;height:1px;background:#fff;"></div>
<div class="t" style="left:816px;top:336.5px;height:12px;line-height:12px;font-size:10.3px;color:#fff;font-family:'Liberation Sans','Noto Sans CJK SC',sans-serif;letter-spacing:0px;transform-origin:0 50%;transform:scaleX(0.86);">4393.80</div>
<div style="left:811px;top:374px;width:4px;height:1px;background:#fff;"></div>
<div class="t" style="left:816px;top:368.5px;height:12px;line-height:12px;font-size:10.3px;color:#fff;font-family:'Liberation Sans','Noto Sans CJK SC',sans-serif;letter-spacing:0px;transform-origin:0 50%;transform:scaleX(0.86);">4391.15</div>
<div style="left:813px;top:192.5px;width:39px;height:10px;background:#8c9bb0;"></div>
<div class="t k" style="left:816px;top:192.0px;height:12px;line-height:12px;font-size:10.3px;color:#000;font-family:'Liberation Sans','Noto Sans CJK SC',sans-serif;letter-spacing:0px;transform-origin:0 50%;transform:scaleX(0.86);">4405.86</div>
<div class="t" style="left:38px;top:410.0px;height:12px;line-height:12px;font-size:10.3px;color:#fff;font-family:'Liberation Sans','Noto Sans CJK SC',sans-serif;transform-origin:0 50%;transform:scaleX(0.86);">5 Jan 2026</div>
<div style="left:102px;top:407px;width:1px;height:3px;background:#fff;"></div>
<div class="t" style="left:103px;top:410.0px;height:12px;line-height:12px;font-size:10.3px;color:#fff;font-family:'Liberation Sans','Noto Sans CJK SC',sans-serif;transform-origin:0 50%;transform:scaleX(0.86);">5 Jan 04:00</div>
<div style="left:166px;top:407px;width:1px;height:3px;background:#fff;"></div>
<div class="t" style="left:167px;top:410.0px;height:12px;line-height:12px;font-size:10.3px;color:#fff;font-family:'Liberation Sans','Noto Sans CJK SC',sans-serif;transform-origin:0 50%;transform:scaleX(0.86);">5 Jan 04:20</div>
<div style="left:230px;top:407px;width:1px;height:3px;background:#fff;"></div>
<div class="t" style="left:231px;top:410.0px;height:12px;line-height:12px;font-size:10.3px;color:#fff;font-family:'Liberation Sans','Noto Sans CJK SC',sans-serif;transform-origin:0 50%;transform:scaleX(0.86);">5 Jan 04:40</div>
<div style="left:294px;top:407px;width:1px;height:3px;background:#fff;"></div>
<div class="t" style="left:295px;top:410.0px;height:12px;line-height:12px;font-size:10.3px;color:#fff;font-family:'Liberation Sans','Noto Sans CJK SC',sans-serif;transform-origin:0 50%;transform:scaleX(0.86);">5 Jan 05:00</div>
<div style="left:358px;top:407px;width:1px;height:3px;background:#fff;"></div>
<div class="t" style="left:359px;top:410.0px;height:12px;line-height:12px;font-size:10.3px;color:#fff;font-family:'Liberation Sans','Noto Sans CJK SC',sans-serif;transform-origin:0 50%;transform:scaleX(0.86);">5 Jan 05:20</div>
<div style="left:422px;top:407px;width:1px;height:3px;background:#fff;"></div>
<div class="t" style="left:423px;top:410.0px;height:12px;line-height:12px;font-size:10.3px;color:#fff;font-family:'Liberation Sans','Noto Sans CJK SC',sans-serif;transform-origin:0 50%;transform:scaleX(0.86);">5 Jan 05:40</div>
<div style="left:486px;top:407px;width:1px;height:3px;background:#fff;"></div>
<div class="t" style="left:487px;top:410.0px;height:12px;line-height:12px;font-size:10.3px;color:#fff;font-family:'Liberation Sans','Noto Sans CJK SC',sans-serif;transform-origin:0 50%;transform:scaleX(0.86);">5 Jan 06:00</div>
<div style="left:550px;top:407px;width:1px;height:3px;background:#fff;"></div>
<div class="t" style="left:551px;top:410.0px;height:12px;line-height:12px;font-size:10.3px;color:#fff;font-family:'Liberation Sans','Noto Sans CJK SC',sans-serif;transform-origin:0 50%;transform:scaleX(0.86);">5 Jan 06:20</div>
<div style="left:614px;top:407px;width:1px;height:3px;background:#fff;"></div>
<div class="t" style="left:615px;top:410.0px;height:12px;line-height:12px;font-size:10.3px;color:#fff;font-family:'Liberation Sans','Noto Sans CJK SC',sans-serif;transform-origin:0 50%;transform:scaleX(0.86);">5 Jan 06:40</div>
<svg style="left:609px;top:85px" width="12" height="6"><path d="M0 0h11l-5.5 5.5z" fill="#9aa4b4"/></svg>
<div style="left:36px;top:427px;width:826px;height:5px;background:#f0f0f0;"></div>
<div style="left:36px;top:431px;width:826px;height:1px;background:#d0d0d0;"></div>
<div style="left:36px;top:432px;width:826px;height:27px;background:#fff;"></div>
<div style="left:36px;top:432px;width:16px;height:27px;background:#c5d2e4;"></div>
<svg style="left:39px;top:439.5px" width="10" height="10"><path d="M1 1l7.5 7.5M8.5 1l-7.5 7.5" stroke="#000" stroke-width="1.3"/></svg>
<svg style="left:62px;top:440px" width="12" height="12"><circle cx="6" cy="6" r="5" fill="none" stroke="#000" stroke-width="1"/><path d="M6 3v6M3 6h6" stroke="#000" stroke-width="1"/></svg>
<div class="t k" style="left:74.5px;top:437.5px;height:17px;line-height:17px;font-size:12.25px;color:#000;font-family:'Liberation Sans','Noto Sans CJK SC',sans-serif;">结余: 30 620.67 USC</div>
<div class="t k" style="left:198px;top:437.5px;height:17px;line-height:17px;font-size:12.25px;color:#000;font-family:'Liberation Sans','Noto Sans CJK SC',sans-serif;">盈利: 0.12</div>
<div class="t k" style="left:262px;top:437.5px;height:17px;line-height:17px;font-size:12.25px;color:#000;font-family:'Liberation Sans','Noto Sans CJK SC',sans-serif;">净值: 30 620.79</div>
<div class="t k" style="left:356px;top:437.5px;height:17px;line-height:17px;font-size:12.25px;color:#000;font-family:'Liberation Sans','Noto Sans CJK SC',sans-serif;">预付款: 13.22</div>
<div class="t k" style="left:438px;top:437.5px;height:17px;line-height:17px;font-size:12.25px;color:#000;font-family:'Liberation Sans','Noto Sans CJK SC',sans-serif;">可用预付款: 30 607.57</div>
<div class="t k" style="left:569.5px;top:437.5px;height:17px;line-height:17px;font-size:12.25px;color:#000;font-family:'Liberation Sans','Noto Sans CJK SC',sans-serif;">预付款维持率: 231 624.74 %</div>
<div style="left:36px;top:459px;width:826px;height:1px;background:#a0a0a0;"></div>
<div style="left:36px;top:460px;width:826px;height:22px;background:#f0f0f0;"></div>
<div class="t k" style="left:38.5px;top:463.5px;height:17px;line-height:17px;font-size:12px;color:#000;font-family:'Liberation Sans','Noto Sans CJK SC',sans-serif;letter-spacing:-0.2px;">查看帮忙,请按 F1</div>
<div style="left:281px;top:463px;width:1px;height:17px;background:#b0b0b0;"></div>
<div class="t k" style="left:287.5px;top:463.5px;height:17px;line-height:17px;font-size:12.2px;color:#000;font-family:'Liberation Sans','Noto Sans CJK SC',sans-serif;">Default</div>
<div style="left:360px;top:463px;width:1px;height:17px;background:#b0b0b0;"></div>
<div class="t k" style="left:366.5px;top:463.5px;height:17px;line-height:17px;font-size:12.2px;color:#000;font-family:'Liberation Sans','Noto Sans CJK SC',sans-serif;">2026.01.05 04:15</div>
<div style="left:473px;top:463px;width:1px;height:17px;background:#b0b0b0;"></div>
<div class="t k" style="left:479.5px;top:463.5px;height:17px;line-height:17px;font-size:12.2px;color:#000;font-family:'Liberation Sans','Noto Sans CJK SC',sans-serif;">O: 4394.15</div>
<div style="left:555px;top:463px;width:1px;height:17px;background:#b0b0b0;"></div>
<div class="t k" style="left:561.5px;top:463.5px;height:17px;line-height:17px;font-size:12.2px;color:#000;font-family:'Liberation Sans','Noto Sans CJK SC',sans-serif;">H: 4398.20</div>
<div style="left:636px;top:463px;width:1px;height:17px;background:#b0b0b0;"></div>
<div class="t k" style="left:642.5px;top:463.5px;height:17px;line-height:17px;font-size:12.2px;color:#000;font-family:'Liberation Sans','Noto Sans CJK SC',sans-serif;">L: 4392.47</div>
<div style="left:714px;top:463px;width:1px;height:17px;background:#b0b0b0;"></div>
<div class="t k" style="left:720.5px;top:463.5px;height:17px;line-height:17px;font-size:12.2px;color:#000;font-family:'Liberation Sans','Noto Sans CJK SC',sans-serif;">C: 4394.59</div>
<div style="left:794px;top:463px;width:1px;height:17px;background:#b0b0b0;"></div>
<div class="t k" style="left:800.5px;top:463.5px;height:17px;line-height:17px;font-size:12.2px;color:#000;font-family:'Liberation Sans','Noto Sans CJK SC',sans-serif;">V: 0</div>
<div style="left:858px;top:478px;width:2px;height:2px;background:#b0b0b0;"></div>
<div style="left:858px;top:475px;width:2px;height:2px;background:#b0b0b0;"></div>
<div style="left:855px;top:478px;width:2px;height:2px;background:#b0b0b0;"></div>
<div style="left:858px;top:472px;width:2px;height:2px;background:#b0b0b0;"></div>
<div style="left:855px;top:475px;width:2px;height:2px;background:#b0b0b0;"></div>
<div style="left:852px;top:478px;width:2px;height:2px;background:#b0b0b0;"></div>
<div style="left:36px;top:483px;width:826px;height:29px;background:#fff;"></div>
<div style="left:44px;top:489px;width:16px;height:16px;background:#ffde00;"></div>
<div style="left:47px;top:496.5px;width:10px;height:1px;background:#c0a000;"></div>
<div class="t k" style="left:65px;top:488.5px;height:18px;line-height:18px;font-size:13px;color:#000;font-family:'Liberation Sans','Noto Sans CJK SC',sans-serif;letter-spacing:-0.06px;">5941335 - GTCGlobalTrade-Server - Hedge - GTC Global Trade Capital Co. Limited - [XAUUSD.c,M5]</div>
<svg style="left:740px;top:491px" width="60" height="14"></svg>
<div style="left:741px;top:497px;width:10px;height:1px;background:#000;"></div>
<div style="left:786px;top:492px;width:9px;height:9px;border:1px solid #000"></div>
<svg style="left:830px;top:491px" width="12" height="12"><path d="M0.5 0.5L11.5 11.5M11.5 0.5L0.5 11.5" stroke="#000" stroke-width="1.1" fill="none"/></svg>
<div style="left:36px;top:512px;width:826px;height:22px;background:#f0f0f0;"></div>
<div style="left:36px;top:533px;width:826px;height:1px;background:#a0a0a0;"></div>
<svg style="left:41px;top:515px" width="18" height="16"><g stroke="#10a010" fill="#e4f8e4" stroke-width="1.3"><path d="M5.5 0.5v14.5M12 0v15" fill="none"/><rect x="3.4" y="3.2" width="4.2" height="8.4"/><rect x="9.9" y="2.2" width="4.2" height="9.8"/></g></svg>
<div class="t k" style="left:68px;top:514.5px;height:17px;line-height:17px;font-size:11.9px;color:#000;font-family:'Liberation Sans','Noto Sans CJK SC',sans-serif;">文件(<u>F</u>)</div>
<div class="t k" style="left:128px;top:514.5px;height:17px;line-height:17px;font-size:11.9px;color:#000;font-family:'Liberation Sans','Noto Sans CJK SC',sans-serif;">查看(<u>V</u>)</div>
<div class="t k" style="left:190px;top:514.5px;height:17px;line-height:17px;font-size:11.9px;color:#000;font-family:'Liberation Sans','Noto Sans CJK SC',sans-serif;">插入(<u>I</u>)</div>
<div class="t k" style="left:248px;top:514.5px;height:17px;line-height:17px;font-size:11.9px;color:#000;font-family:'Liberation Sans','Noto Sans CJK SC',sans-serif;">图表(<u>C</u>)</div>
<div class="t k" style="left:310px;top:514.5px;height:17px;line-height:17px;font-size:11.9px;color:#000;font-family:'Liberation Sans','Noto Sans CJK SC',sans-serif;">工具(<u>T</u>)</div>
<div class="t k" style="left:371px;top:514.5px;height:17px;line-height:17px;font-size:11.9px;color:#000;font-family:'Liberation Sans','Noto Sans CJK SC',sans-serif;">窗口(<u>W</u>)</div>
<div class="t k" style="left:437px;top:514.5px;height:17px;line-height:17px;font-size:11.9px;color:#000;font-family:'Liberation Sans','Noto Sans CJK SC',sans-serif;">帮助(<u>H</u>)</div>
<div style="left:803.5px;top:514.5px;width:15.5px;height:16px;background:#fff;border:1px solid #dadada"></div>
<div style="left:822.5px;top:514.5px;width:15.5px;height:16px;background:#fff;border:1px solid #dadada"></div>
<div style="left:841.5px;top:514.5px;width:15.5px;height:16px;background:#fff;border:1px solid #dadada"></div>
<div style="left:808px;top:525px;width:6.5px;height:2px;background:#5a6e8c;"></div>
<svg style="left:826px;top:518.5px" width="11" height="10"><path d="M3 3v-2h6.5v5h-2M1 3.7h6.5v4.6h-6.5z" stroke="#5a6e8c" stroke-width="1.5" fill="none"/></svg>
<svg style="left:846px;top:519.5px" width="9" height="8"><path d="M1 0.5L8 7.5M8 0.5L1 7.5" stroke="#5a6e8c" stroke-width="2" fill="none"/></svg>
<div style="left:36px;top:534px;width:826px;height:30px;background:#f0f0f0;"></div>
<div style="left:39px;top:538.0px;width:2px;height:2px;background:#b8b8b8;"></div>
<div style="left:39px;top:541.3px;width:2px;height:2px;background:#b8b8b8;"></div>
<div style="left:39px;top:544.6px;width:2px;height:2px;background:#b8b8b8;"></div>
<div style="left:39px;top:547.9px;width:2px;height:2px;background:#b8b8b8;"></div>
<div style="left:39px;top:551.2px;width:2px;height:2px;background:#b8b8b8;"></div>
<div style="left:39px;top:554.5px;width:2px;height:2px;background:#b8b8b8;"></div>
<div style="left:39px;top:557.8px;width:2px;height:2px;background:#b8b8b8;"></div>
<svg style="left:48px;top:539px" width="22" height="21"><path d="M1.5 1.5v17h16.5" stroke="#a0a0a0" stroke-width="1.1" fill="none"/><path d="M4.3 10.8l4.1-3.4 4.5 4.2 5-4.6" stroke="#2a72b8" stroke-width="1.3" fill="none"/></svg>
<svg style="left:73px;top:548.5px" width="8" height="5"><path d="M0 0h7.4l-3.7 4.2z" fill="#111"/></svg>
<svg style="left:90px;top:539px" width="22" height="21"><rect x="1.6" y="1.6" width="18" height="14" rx="2.2" fill="#fff" stroke="#2a72b8" stroke-width="1.3"/><path d="M3 18h15.2M4.5 20h12.2" stroke="#2a72b8" stroke-width="1.1"/><path d="M4.5 7.6l3.6-2.6 3 1.8 5-3.2" stroke="#2a72b8" stroke-width="1.2" fill="none"/><path d="M5.5 12.8v-2M8.5 12.8v-3M11.5 12.8v-2M14.5 12.8v-4" stroke="#16a016" stroke-width="1.4"/></svg>
<svg style="left:116px;top:548.5px" width="8" height="5"><path d="M0 0h7.4l-3.7 4.2z" fill="#111"/></svg>
<div style="left:137px;top:541px;width:15px;height:15px;background:#ffc800;border:1px solid #e0a400;border-radius:2.5px"></div>
<div class="t" style="left:141.2px;top:540.8px;height:18px;line-height:18px;font-size:13px;color:#c08c00;font-family:'Liberation Sans','Noto Sans CJK SC',sans-serif;">$</div>
<div style="left:163px;top:537px;width:1px;height:24px;background:#9a9a9a;"></div>
<div class="t" style="left:174px;top:541.5px;height:17px;line-height:17px;font-size:12px;color:#1f6fb5;font-family:'Liberation Sans','Noto Sans CJK SC',sans-serif;letter-spacing:-0.6px;">IDE</div>
<svg style="left:206px;top:539px" width="20" height="20"><path d="M6 8.5V5.2a2.2 2.6 0 0 1 4.4 0v3M9 8.5V5.2a2.2 2.6 0 0 1 4.4 0v3" stroke="#c89400" stroke-width="1.1" fill="none"/><path d="M3.4 6.2h12l1.5 12.3h-15z" fill="#ffcc10" stroke="#dca400" stroke-width="0.9"/><path d="M6 6.5v2M13.4 6.5v2" stroke="#c89400" stroke-width="1.1"/></svg>
<svg style="left:237px;top:541px" width="22" height="16"><g stroke="#2a72b8" stroke-width="1.25" fill="none"><circle cx="10.5" cy="8.5" r="1.9"/><path d="M6.9 5.3a5 5 0 0 0 0 6.4M14.1 5.3a5 5 0 0 1 0 6.4M4.2 3.4a8 8 0 0 0 0 10.2M16.8 3.4a8 8 0 0 1 0 10.2"/></g></svg>
<svg style="left:269px;top:539px" width="22" height="20"><g stroke="#2a72b8" stroke-width="1.25" fill="#e4f0fb"><path d="M5.6 12.4a3.4 3.4 0 0 1 .3-6.8 5 5 0 0 1 9.4 .9 3 3 0 0 1 -.3 5.9z"/><path d="M10.5 12.4v3.3M5 15.7h12" fill="none"/></g><circle cx="10.5" cy="15.7" r="1.2" fill="#2a72b8"/></svg>
<svg style="left:301px;top:539px" width="23" height="22"><g stroke="#2a72b8" stroke-width="1.25" fill="none"><path d="M3.6 13.6a8 8 0 1 1 14.6-4.4"/><path d="M6.4 12.6a5 5 0 1 1 8.8-3.8"/><circle cx="10.3" cy="10" r="1.7"/></g><circle cx="14.6" cy="14.4" r="4.9" fill="#fff" stroke="#16a016" stroke-width="1.3"/><path d="M14.6 11.4v6M11.6 14.4h6" stroke="#16a016" stroke-width="1.4"/></svg>
<div style="left:329px;top:537px;width:1px;height:24px;background:#9a9a9a;"></div>
<div style="left:334px;top:536px;width:80px;height:25px;background:#cde4f7;border:1px solid #b4d3ee"></div>
<svg style="left:342px;top:544px" width="12" height="12"><path d="M1.5 1.2l8.4 4.6-8.4 4.6z" fill="#f4fbf4" stroke="#16a016" stroke-width="1.3"/></svg>
<div class="t k" style="left:361px;top:542.3px;height:17px;line-height:17px;font-size:12.3px;color:#000;font-family:'Liberation Sans','Noto Sans CJK SC',sans-serif;">算法交易</div>
<svg style="left:424px;top:540px" width="15" height="19"><path d="M3.5 1h10v12.5l-4 4.5h-6a2.5 2.5 0 0 1 -2.5-2.5v-12a2.5 2.5 0 0 1 2.5-2.5z" fill="#fff" stroke="#1f6fb5" stroke-width="1.4"/><path d="M13.5 13.5l-4 4.5v-4.5z" fill="#1f6fb5"/><path d="M7 5.5v7M3.5 9h7" stroke="#1f6fb5" stroke-width="1.4"/></svg>
<div class="t k" style="left:444px;top:542.3px;height:17px;line-height:17px;font-size:12.3px;color:#000;font-family:'Liberation Sans','Noto Sans CJK SC',sans-serif;">新订单</div>
<div style="left:491px;top:537px;width:1px;height:24px;background:#9a9a9a;"></div>
<svg style="left:502px;top:540px" width="20" height="20"><path d="M5 5.7v12.2M1.5 14.7h3.5M5 7.5h2.6M15.3 1.3v12.2M15.3 5h-3.2M15.3 10.6h3" stroke="#16a016" stroke-width="1.4" fill="none"/></svg>
<div style="left:529px;top:536px;width:27px;height:25px;background:#cde4f7;border:1px solid #b4d3ee"></div>
<svg style="left:534px;top:540px" width="18" height="18"><g stroke="#16a016" stroke-width="1.4" fill="#e8f8e8"><path d="M5.8 0.8v16.4M13.8 0.8v16.4" fill="none"/><rect x="3.8" y="3.5" width="4" height="11.5"/><rect x="11.8" y="3.5" width="4" height="11.5"/></g></svg>
<svg style="left:566px;top:543px" width="18" height="12"><path d="M1 7.5l3-1.5 2.6 4 3.6-8.5 3 7.5 2-3.3 2 1" stroke="#16a016" stroke-width="1.3" fill="none"/></svg>
<div style="left:592px;top:537px;width:1px;height:24px;background:#9a9a9a;"></div>
<div style="left:598px;top:536px;width:26px;height:25px;background:#cde4f7;border:1px solid #b4d3ee"></div>
<svg style="left:601px;top:540px" width="22" height="20"><g stroke="#16a016" stroke-width="1.3" fill="#e8f8e8"><path d="M3 1v13M8 1v13" fill="none"/><rect x="1.5" y="3.5" width="3" height="8"/><rect x="6.5" y="3.5" width="3" height="8"/></g><path d="M11 7.5h6M14.5 5l2.5 2.5-2.5 2.5" stroke="#16a016" stroke-width="1.3" fill="none"/><path d="M20 0v15" stroke="#1f6fb5" stroke-width="1.4"/><path d="M1 17.5h19" stroke="#1f6fb5" stroke-width="1"/></svg>
<div style="left:631px;top:536px;width:26px;height:25px;background:#cde4f7;border:1px solid #b4d3ee"></div>
<svg style="left:634px;top:540px" width="22" height="20"><g stroke="#16a016" stroke-width="1.3" fill="#e8f8e8"><path d="M3 1v13M8 1v13" fill="none"/><rect x="1.5" y="3.5" width="3" height="8"/><rect x="6.5" y="3.5" width="3" height="8"/></g><path d="M12 0v15" stroke="#1f6fb5" stroke-width="1.4"/><path d="M20 7.5h-6M16.5 5l-2.5 2.5 2.5 2.5" stroke="#1f6fb5" stroke-width="1.3" fill="none"/><path d="M1 17.5h19" stroke="#1f6fb5" stroke-width="1"/></svg>
<div style="left:664px;top:537px;width:1px;height:24px;background:#9a9a9a;"></div>
<svg style="left:673px;top:539px" width="22" height="22"><rect x="1" y="1" width="18" height="18" rx="2" fill="none" stroke="#1f6fb5" stroke-width="1.3" stroke-dasharray="3 2"/><rect x="7" y="10" width="13" height="10" rx="1.5" fill="#f0f0f0" stroke="#1f6fb5" stroke-width="1.4"/><path d="M10.5 10l1-2h4l1 2" stroke="#1f6fb5" stroke-width="1.3" fill="#f0f0f0"/><circle cx="13.5" cy="15" r="2.2" fill="none" stroke="#1f6fb5" stroke-width="1.3"/></svg>
<div style="left:701px;top:538.0px;width:2px;height:2px;background:#b8b8b8;"></div>
<div style="left:701px;top:541.3px;width:2px;height:2px;background:#b8b8b8;"></div>
<div style="left:701px;top:544.6px;width:2px;height:2px;background:#b8b8b8;"></div>
<div style="left:701px;top:547.9px;width:2px;height:2px;background:#b8b8b8;"></div>
<div style="left:701px;top:551.2px;width:2px;height:2px;background:#b8b8b8;"></div>
<div style="left:701px;top:554.5px;width:2px;height:2px;background:#b8b8b8;"></div>
<div style="left:701px;top:557.8px;width:2px;height:2px;background:#b8b8b8;"></div>
<svg style="left:713px;top:541px" width="18" height="18"><circle cx="7" cy="7" r="5.3" fill="none" stroke="#222" stroke-width="1.5"/><path d="M11 11l5 5" stroke="#222" stroke-width="1.7"/></svg>
<svg style="left:744px;top:539px" width="26" height="22"><circle cx="8" cy="12" r="6" fill="none" stroke="#222" stroke-width="1.3"/><circle cx="8" cy="10" r="2" fill="none" stroke="#222" stroke-width="1.2"/><path d="M3.5 16a5 5 0 0 1 9 0" fill="none" stroke="#222" stroke-width="1.2"/><circle cx="15.5" cy="7" r="7" fill="#e0301e"/></svg>
<div class="t" style="left:756.5px;top:538.5px;height:15px;line-height:15px;font-size:11px;color:#fff;font-family:'Liberation Sans','Noto Sans CJK SC',sans-serif;">1</div>
<svg style="left:783px;top:540px" width="14" height="10"><path d="M7 0.8l4.5 4.5h-2.5v3.5h-4v-3.5h-2.5z" fill="#e8f8e8" stroke="#16a016" stroke-width="1.3"/></svg>
<div class="t" style="left:783px;top:549.5px;height:11px;line-height:11px;font-size:8px;color:#16a016;font-family:'Liberation Sans','Noto Sans CJK SC',sans-serif;font-weight:bold;letter-spacing:-0.4px;">LVL</div>
<div style="left:804px;top:542px;width:49px;height:13px;background:#fff;border:1px solid #9a9a9a"></div>
<div style="left:806px;top:544px;width:13px;height:11px;background:#3ad23a;"></div>
<div style="left:36px;top:564px;width:826px;height:295px;background:#000;"></div>
<div style="left:38px;top:567px;width:770px;height:1px;background:#fff;"></div>
<div style="left:38px;top:567px;width:1px;height:292px;background:#fff;"></div>
<div style="left:807px;top:567px;width:1px;height:292px;background:#fff;"></div>
<svg style="left:44px;top:572px" width="36" height="10"><rect x="0.5" y="0.5" width="13.5" height="9" fill="#fff" stroke="#e03030"/><path d="M1 3.3h5M1 6.3h5" stroke="#e03030" stroke-width="1.3"/><path d="M8 3.3h5.5M8 6.3h5.5" stroke="#2060c0" stroke-width="1.3"/><path d="M7 0v10" stroke="#fff"/><rect x="20" y="0" width="14.5" height="10" fill="#fff"/><rect x="20.5" y="0.5" width="4" height="9" fill="#f4b0a8" stroke="#e03030"/><rect x="25" y="0" width="5" height="3" fill="#222"/><rect x="26" y="1" width="3" height="1" fill="#fff"/><rect x="30" y="2.5" width="4" height="7" fill="#a8d0f4" stroke="#2878d0"/></svg>
<div class="t" style="left:84px;top:570.5px;height:13px;line-height:13px;font-size:9.6px;color:#fff;font-family:'Liberation Sans','Noto Sans CJK SC',sans-serif;letter-spacing:-0.12px;">XAUUSD.c, M5:&nbsp; Gold vs US Dollar / Spot</div>
<div style="left:50px;top:588px;width:238px;height:23px;background:#1e1e1e;"></div>
<div class="t m" style="left:54px;top:592.5px;height:21px;line-height:21px;font-size:16px;color:#e6e600;"><span class="l" style="font-size:15px;letter-spacing:-1px;position:relative;top:-1px">===&nbsp;</span><span class="c" style="font-weight:400;letter-spacing:0px">状态面板</span><span class="l" style="font-size:15px;letter-spacing:-1px;position:relative;top:-1px">&nbsp;===</span></div>
<div class="t m" style="left:54px;top:610.5px;height:18px;line-height:18px;font-size:13px;color:#fff;"><span class="c" style="font-size:12.5px;letter-spacing:1.5px">趋势状态</span><span class="l" style="letter-spacing:-0.8px">:&nbsp;</span><span class="c" style="font-size:12.5px;letter-spacing:1.5px">震荡行情</span></div>
<div class="t m" style="left:54px;top:630.5px;height:18px;line-height:18px;font-size:13px;color:#fff;"><span class="c" style="font-size:12.5px;letter-spacing:1.5px">成交量</span><span class="l" style="letter-spacing:-0.8px">:&nbsp;</span><span class="c" style="font-size:12.5px;letter-spacing:1.5px">未启用</span></div>
<div class="t m" style="left:54px;top:650.5px;height:18px;line-height:18px;font-size:13px;color:#fff;"><span class="l" style="letter-spacing:-0.8px">RSI:&nbsp;50.00&nbsp;(</span><span class="c" style="font-size:12.5px;letter-spacing:1.5px">未启用</span><span class="l" style="letter-spacing:-0.8px">)</span></div>
<div class="t m" style="left:54px;top:670.5px;height:18px;line-height:18px;font-size:13px;color:#8a8a8a;"><span class="l" style="letter-spacing:-0.8px">ATR:&nbsp;0.000</span></div>
<div class="t m" style="left:54px;top:690.5px;height:18px;line-height:18px;font-size:13px;color:#8a8a8a;"><span class="l" style="letter-spacing:-0.8px">MA:&nbsp;</span><span class="c" style="font-size:12.5px;letter-spacing:1.5px">未启用</span></div>
<div class="t m" style="left:54px;top:710.5px;height:18px;line-height:18px;font-size:13px;color:#8a8a8a;"><span class="l" style="letter-spacing:-0.8px">MACD:&nbsp;</span><span class="c" style="font-size:12.5px;letter-spacing:1.5px">未启用</span></div>
<div class="t m" style="left:54px;top:730.5px;height:18px;line-height:18px;font-size:13px;color:#fff;"><span class="c" style="font-size:12.5px;letter-spacing:1.5px">挂单状态</span><span class="l" style="letter-spacing:-0.8px">:&nbsp;</span><span class="c" style="font-size:12.5px;letter-spacing:1.5px">无挂单</span></div>
<div class="t m" style="left:54px;top:750.5px;height:18px;line-height:18px;font-size:13px;color:#008a00;"><span class="c" style="font-size:12.5px;letter-spacing:1.5px">时间状态</span><span class="l" style="letter-spacing:-0.8px">:&nbsp;</span><span class="c" style="font-size:12.5px;letter-spacing:1.5px">交易时间</span></div>
<div class="t m" style="left:54px;top:770.5px;height:18px;line-height:18px;font-size:13px;color:#008a00;"><span class="c" style="font-size:12.5px;letter-spacing:1.5px">锁仓状态</span><span class="l" style="letter-spacing:-0.8px">:&nbsp;</span><span class="c" style="font-size:12.5px;letter-spacing:1.5px">未锁仓</span></div>
<div class="t m" style="left:54px;top:790.5px;height:18px;line-height:18px;font-size:13px;color:#fff;"><span class="c" style="font-size:12.5px;letter-spacing:1.5px">交易条件</span><span class="l" style="letter-spacing:-0.8px">:&nbsp;</span><span class="c" style="font-size:12.5px;letter-spacing:1.5px">多空均可交易</span></div>
<div class="t m" style="left:54px;top:810.5px;height:18px;line-height:18px;font-size:13px;color:#008a00;"><span class="c" style="font-size:12.5px;letter-spacing:1.5px">多单允许</span><span class="l" style="letter-spacing:-0.8px">:&nbsp;</span><span class="c" style="font-size:12.5px;letter-spacing:1.5px">是</span></div>
<div class="t m" style="left:54px;top:830.5px;height:18px;line-height:18px;font-size:13px;color:#008a00;"><span class="c" style="font-size:12.5px;letter-spacing:1.5px">空单允许</span><span class="l" style="letter-spacing:-0.8px">:&nbsp;</span><span class="c" style="font-size:12.5px;letter-spacing:1.5px">是</span></div>
<div class="t m" style="left:54px;top:850.5px;height:18px;line-height:18px;font-size:13px;color:#8a8a8a;"><span class="c" style="font-size:12.5px;letter-spacing:1.5px">更新时间</span><span class="l" style="letter-spacing:-0.8px">:&nbsp;06:40:05</span></div>
<div style="left:273px;top:571px;width:14px;height:11px;border:1px solid #aab4c4;border-radius:2px;background:#000"></div>
<div style="left:278px;top:577px;width:6px;height:1px;background:#aab4c4;"></div>
<svg style="left:272px;top:590px" width="18" height="17"><path d="M9 1v15M1.5 8.5h15" stroke="#9a9a9a" stroke-width="1.6"/><path d="M9 0l3 3.5h-6zM9 17l3-3.5h-6zM0 8.5l3.5-3v6zM18 8.5l-3.5-3v6z" fill="#9a9a9a"/></svg>
<div style="left:273px;top:613px;width:14px;height:11px;border:1px solid #aab4c4;border-radius:2px;background:#000"></div>
<div class="t" style="left:274.5px;top:613.0px;height:13px;line-height:13px;font-size:12px;color:#aab4c4;font-family:'Liberation Sans','Noto Sans CJK SC',sans-serif;transform:scaleY(0.95);">清</div>
<div style="left:273px;top:632px;width:14px;height:11px;border:1px solid #aab4c4;border-radius:2px;background:#000"></div>
<div class="t" style="left:278.5px;top:632.0px;height:13px;line-height:13px;font-size:10px;color:#aab4c4;font-family:'Liberation Sans','Noto Sans CJK SC',sans-serif;">?</div>
<div style="left:273px;top:651px;width:14px;height:11px;border:1px solid #aab4c4;border-radius:2px;background:#000"></div>
<div class="t" style="left:274.5px;top:651.0px;height:13px;line-height:13px;font-size:12px;color:#aab4c4;font-family:'Liberation Sans','Noto Sans CJK SC',sans-serif;">隸</div>
<div style="left:273px;top:670px;width:14px;height:11px;border:1px solid #aab4c4;border-radius:2px;background:#000"></div>
<svg style="left:276px;top:672px" width="11" height="9"><path d="M3.5 0.5h6v5h-2M0.5 3.5h6v5h-6z" stroke="#aab4c4" fill="none"/></svg>
<div class="t" style="left:275.5px;top:738px;width:34px;height:12px;line-height:12px;font-size:11.5px;color:#f0f000;font-family:'Liberation Sans','Noto Sans CJK SC',sans-serif;transform-origin:0 0;transform:translate(12px,0) rotate(90deg)">V8.18</div>
<div class="t" style="left:44px;top:681.0px;height:10px;line-height:10px;font-size:10px;color:#fff;font-family:'Liberation Mono','Noto Sans CJK SC',monospace;letter-spacing:-1px;">B</div>
<div class="t" style="left:44px;top:684.0px;height:10px;line-height:10px;font-size:10px;color:#fff;font-family:'Liberation Mono','Noto Sans CJK SC',monospace;letter-spacing:-1px;">B</div>
<div class="t" style="left:44px;top:702.0px;height:10px;line-height:10px;font-size:10px;color:#fff;font-family:'Liberation Mono','Noto Sans CJK SC',monospace;letter-spacing:-1px;">B</div>
<div class="t" style="left:44px;top:706.0px;height:10px;line-height:10px;font-size:10px;color:#fff;font-family:'Liberation Mono','Noto Sans CJK SC',monospace;letter-spacing:-1px;">S</div>
<div class="t" style="left:44px;top:734.5px;height:10px;line-height:10px;font-size:10px;color:#fff;font-family:'Liberation Mono','Noto Sans CJK SC',monospace;letter-spacing:-1px;">I</div>
<div class="t" style="left:44px;top:742.5px;height:10px;line-height:10px;font-size:10px;color:#fff;font-family:'Liberation Mono','Noto Sans CJK SC',monospace;letter-spacing:-1px;">S</div>
<div class="t" style="left:44px;top:764.5px;height:10px;line-height:10px;font-size:10px;color:#fff;font-family:'Liberation Mono','Noto Sans CJK SC',monospace;letter-spacing:-1px;">S</div>
<div class="t" style="left:44px;top:789.5px;height:10px;line-height:10px;font-size:10px;color:#fff;font-family:'Liberation Mono','Noto Sans CJK SC',monospace;letter-spacing:-1px;">S</div>
<svg style="left:39px;top:691px" width="8" height="1"><path d="M0 0.5h8" stroke="#00c000" stroke-dasharray="2 2"/></svg>
<div style="left:39px;top:694px;width:8px;height:1px;background:#e00000;"></div>
<div style="left:39px;top:702px;width:9px;height:1px;background:#c0c8d8;"></div>
<svg style="left:39px;top:711px" width="8" height="1"><path d="M0 0.5h8" stroke="#00c000" stroke-dasharray="2 2"/></svg>
<svg style="left:39px;top:718px" width="8" height="1"><path d="M0 0.5h8" stroke="#00c000" stroke-dasharray="2 2"/></svg>
<div style="left:39px;top:745px;width:8px;height:1px;background:#e00000;"></div>
<svg style="left:39px;top:751px" width="8" height="1"><path d="M0 0.5h8" stroke="#00c000" stroke-dasharray="2 2"/></svg>
<svg style="left:39px;top:775px" width="8" height="1"><path d="M0 0.5h8" stroke="#00c000" stroke-dasharray="2 2"/></svg>
<svg style="left:39px;top:800px" width="8" height="1"><path d="M0 0.5h8" stroke="#00c000" stroke-dasharray="2 2"/></svg>
<div style="left:39px;top:848px;width:3px;height:7px;background:#fff;border:1px solid #00e000"></div>
<div style="left:289px;top:569px;width:518px;height:290px;overflow:hidden;background:#232a33">
<div style="left:0;top:0;width:518px;height:42px;background:#1b1c1e"></div>
<div style="left:0;top:0;width:518px;height:1px;background:#8c96a6"></div>
<div style="left:0;top:0;width:1px;height:290px;background:#8c96a6"></div>
<div class="t" style="left:5px;top:3px;height:16px;line-height:16px;font-size:10px;color:#ffee00;font-family:'Liberation Sans','Noto Sans CJK SC',sans-serif">MTCommander<span style="font-size:12px">资管</span></div>
<div class="t" style="left:17px;top:24px;height:18px;line-height:18px;font-size:13px;color:#6f7379;font-family:'Liberation Sans','Noto Sans CJK SC',sans-serif;">综</div>
<div style="left:37px;top:25px;width:18px;height:16px;background:#2b323c;border-radius:2px"></div>
<div class="t" style="left:39px;top:24px;height:18px;line-height:18px;font-size:13px;color:#fff;font-family:'Liberation Sans','Noto Sans CJK SC',sans-serif;">日</div>
<div class="t" style="left:61px;top:24px;height:18px;line-height:18px;font-size:13px;color:#6f7379;font-family:'Liberation Sans','Noto Sans CJK SC',sans-serif;">周</div>
<div class="t" style="left:83px;top:24px;height:18px;line-height:18px;font-size:13px;color:#6f7379;font-family:'Liberation Sans','Noto Sans CJK SC',sans-serif;">月</div>
<div class="t" style="left:105px;top:24px;height:18px;line-height:18px;font-size:13px;color:#6f7379;font-family:'Liberation Sans','Noto Sans CJK SC',sans-serif;">季</div>
<div class="t" style="left:127px;top:24px;height:18px;line-height:18px;font-size:13px;color:#6f7379;font-family:'Liberation Sans','Noto Sans CJK SC',sans-serif;">年</div>
<div class="t" style="left:149px;top:24px;height:18px;line-height:18px;font-size:13px;color:#6f7379;font-family:'Liberation Sans','Noto Sans CJK SC',sans-serif;">币</div>
<div class="t" style="left:174px;top:24px;height:18px;line-height:18px;font-size:11px;color:#54585e;font-family:'Liberation Mono','Noto Sans CJK SC',monospace;font-weight:bold;">M</div>
<div class="t" style="left:193px;top:24px;height:18px;line-height:18px;font-size:13px;color:#6f7379;font-family:'Liberation Sans','Noto Sans CJK SC',sans-serif;">备</div>
<div class="t" style="left:218px;top:24px;height:18px;line-height:18px;font-size:13px;color:#6f7379;font-family:'Liberation Sans','Noto Sans CJK SC',sans-serif">账户</div>
<div class="t" style="left:305px;top:24px;height:18px;line-height:18px;font-size:13px;color:#6f7379;font-family:'Liberation Sans','Noto Sans CJK SC',sans-serif">轨迹</div>
<svg style="left:1px;top:40px" width="5" height="8"><path d="M0 0l4.5 4-4.5 4z" fill="#b8b8b8"/></svg>
<div style="left:13px;top:44px;width:1px;height:99px;background:#70757d"></div>
<div style="left:13px;top:143px;width:518px;height:1px;background:#70757d"></div>
<svg style="left:0;top:0" width="518" height="290"><polyline points="13,71 89.5,63.700000000000045 166,45.5 242.5,106.70000000000005 319,96.5 395.5,90 472,85.60000000000002 548.5,81" fill="none" stroke="#00bfff" stroke-width="2.2" stroke-linejoin="miter"/></svg>
<div class="t" style="left:48px;top:144px;height:11px;line-height:11px;font-size:8.6px;color:#8a9098;font-family:'Liberation Sans','Noto Sans CJK SC',sans-serif">2025.12.10</div>
<div class="t" style="left:6px;top:158px;height:16px;line-height:16px;font-size:12px;color:#c4ccdc;font-family:'Liberation Sans','Noto Sans CJK SC',sans-serif">日期</div>
<div class="t" style="left:86px;top:158px;height:16px;line-height:16px;font-size:12px;color:#c4ccdc;font-family:'Liberation Sans','Noto Sans CJK SC',sans-serif">总手数</div>
<div class="t" style="left:136px;top:158px;height:16px;line-height:16px;font-size:12px;color:#c4ccdc;font-family:'Liberation Sans','Noto Sans CJK SC',sans-serif">最小|大手数</div>
<div class="t" style="left:206px;top:158px;height:16px;line-height:16px;font-size:12px;color:#c4ccdc;font-family:'Liberation Sans','Noto Sans CJK SC',sans-serif">次数</div>
<div class="t" style="left:246px;top:158px;height:16px;line-height:16px;font-size:12px;color:#c4ccdc;font-family:'Liberation Sans','Noto Sans CJK SC',sans-serif">盈亏金额</div>
<div class="t" style="left:326px;top:158px;height:16px;line-height:16px;font-size:12px;color:#c4ccdc;font-family:'Liberation Sans','Noto Sans CJK SC',sans-serif">百分比%</div>
<div class="t" style="left:386px;top:158px;height:16px;line-height:16px;font-size:12px;color:#c4ccdc;font-family:'Liberation Sans','Noto Sans CJK SC',sans-serif">出入金</div>
<div class="t" style="left:446px;top:158px;height:16px;line-height:16px;font-size:12px;color:#c4ccdc;font-family:'Liberation Sans','Noto Sans CJK SC',sans-serif">余额</div>
<div class="t" style="left:6px;top:173px;height:14px;line-height:14px;font-size:12px;color:#c4ccdc;font-family:'Liberation Sans','Noto Sans CJK SC',sans-serif">持仓</div>
<div class="t" style="left:86px;top:173px;height:14px;line-height:14px;font-size:11px;color:#00ecec;font-family:'Liberation Sans','Noto Sans CJK SC',sans-serif">0.17</div>
<div class="t" style="left:136px;top:173px;height:14px;line-height:14px;font-size:11px;color:#00ecec;font-family:'Liberation Sans','Noto Sans CJK SC',sans-serif">0.02 | 0.04</div>
<div class="t" style="left:206px;top:173px;height:14px;line-height:14px;font-size:11px;color:#00ecec;font-family:'Liberation Sans','Noto Sans CJK SC',sans-serif">7</div>
<div class="t" style="left:246px;top:173px;height:14px;line-height:14px;font-size:11px;color:#00ecec;font-family:'Liberation Sans','Noto Sans CJK SC',sans-serif">-32.35</div>
<div class="t" style="left:326px;top:173px;height:14px;line-height:14px;font-size:11px;color:#00ecec;font-family:'Liberation Sans','Noto Sans CJK SC',sans-serif">-0.11 %</div>
<div class="t" style="left:386px;top:173px;height:14px;line-height:14px;font-size:11px;color:#c4ccdc;font-family:'Liberation Sans','Noto Sans CJK SC',sans-serif">0</div>
<div class="t" style="left:446px;top:173px;height:14px;line-height:14px;font-size:11px;color:#c4ccdc;font-family:'Liberation Sans','Noto Sans CJK SC',sans-serif">30771.01</div>
<div class="t" style="left:6px;top:187px;height:14px;line-height:14px;font-size:11px;color:#c4ccdc;font-family:'Liberation Sans','Noto Sans CJK SC',sans-serif">2026.01.05</div>
<div class="t" style="left:86px;top:187px;height:14px;line-height:14px;font-size:11px;color:#f00c0c;font-family:'Liberation Sans','Noto Sans CJK SC',sans-serif">12.81</div>
<div class="t" style="left:136px;top:187px;height:14px;line-height:14px;font-size:11px;color:#f00c0c;font-family:'Liberation Sans','Noto Sans CJK SC',sans-serif">0.02 | 0.14</div>
<div class="t" style="left:206px;top:187px;height:14px;line-height:14px;font-size:11px;color:#f00c0c;font-family:'Liberation Sans','Noto Sans CJK SC',sans-serif">523</div>
<div class="t" style="left:246px;top:187px;height:14px;line-height:14px;font-size:11px;color:#f00c0c;font-family:'Liberation Sans','Noto Sans CJK SC',sans-serif">770.63</div>
<div class="t" style="left:326px;top:187px;height:14px;line-height:14px;font-size:11px;color:#f00c0c;font-family:'Liberation Sans','Noto Sans CJK SC',sans-serif">2.57 %</div>
<div class="t" style="left:386px;top:187px;height:14px;line-height:14px;font-size:11px;color:#c4ccdc;font-family:'Liberation Sans','Noto Sans CJK SC',sans-serif">0</div>
<div class="t" style="left:446px;top:187px;height:14px;line-height:14px;font-size:11px;color:#c4ccdc;font-family:'Liberation Sans','Noto Sans CJK SC',sans-serif">30771.01</div>
<div class="t" style="left:6px;top:201px;height:14px;line-height:14px;font-size:11px;color:#c4ccdc;font-family:'Liberation Sans','Noto Sans CJK SC',sans-serif">2026.01.03</div>
<div class="t" style="left:86px;top:201px;height:14px;line-height:14px;font-size:11px;color:#c4ccdc;font-family:'Liberation Sans','Noto Sans CJK SC',sans-serif">0.00</div>
<div class="t" style="left:136px;top:201px;height:14px;line-height:14px;font-size:11px;color:#c4ccdc;font-family:'Liberation Sans','Noto Sans CJK SC',sans-serif">0.00 | 0.00</div>
<div class="t" style="left:206px;top:201px;height:14px;line-height:14px;font-size:11px;color:#c4ccdc;font-family:'Liberation Sans','Noto Sans CJK SC',sans-serif">0</div>
<div class="t" style="left:246px;top:201px;height:14px;line-height:14px;font-size:11px;color:#c4ccdc;font-family:'Liberation Sans','Noto Sans CJK SC',sans-serif">0.00</div>
<div class="t" style="left:326px;top:201px;height:14px;line-height:14px;font-size:11px;color:#c4ccdc;font-family:'Liberation Sans','Noto Sans CJK SC',sans-serif">0.00 %</div>
<div class="t" style="left:386px;top:201px;height:14px;line-height:14px;font-size:11px;color:#00ecec;font-family:'Liberation Sans','Noto Sans CJK SC',sans-serif">-13946</div>
<div class="t" style="left:446px;top:201px;height:14px;line-height:14px;font-size:11px;color:#c4ccdc;font-family:'Liberation Sans','Noto Sans CJK SC',sans-serif">30000.38</div>
<div class="t" style="left:6px;top:215px;height:14px;line-height:14px;font-size:11px;color:#c4ccdc;font-family:'Liberation Sans','Noto Sans CJK SC',sans-serif">2026.01.02</div>
<div class="t" style="left:86px;top:215px;height:14px;line-height:14px;font-size:11px;color:#f00c0c;font-family:'Liberation Sans','Noto Sans CJK SC',sans-serif">36.57</div>
<div class="t" style="left:136px;top:215px;height:14px;line-height:14px;font-size:11px;color:#f00c0c;font-family:'Liberation Sans','Noto Sans CJK SC',sans-serif">0.02 | 4.74</div>
<div class="t" style="left:206px;top:215px;height:14px;line-height:14px;font-size:11px;color:#f00c0c;font-family:'Liberation Sans','Noto Sans CJK SC',sans-serif">351</div>
<div class="t" style="left:246px;top:215px;height:14px;line-height:14px;font-size:11px;color:#f00c0c;font-family:'Liberation Sans','Noto Sans CJK SC',sans-serif">5544.00</div>
<div class="t" style="left:326px;top:215px;height:14px;line-height:14px;font-size:11px;color:#f00c0c;font-family:'Liberation Sans','Noto Sans CJK SC',sans-serif">14.44 %</div>
<div class="t" style="left:386px;top:215px;height:14px;line-height:14px;font-size:11px;color:#c4ccdc;font-family:'Liberation Sans','Noto Sans CJK SC',sans-serif">0</div>
<div class="t" style="left:446px;top:215px;height:14px;line-height:14px;font-size:11px;color:#c4ccdc;font-family:'Liberation Sans','Noto Sans CJK SC',sans-serif">43946.38</div>
<div class="t" style="left:6px;top:229px;height:14px;line-height:14px;font-size:11px;color:#c4ccdc;font-family:'Liberation Sans','Noto Sans CJK SC',sans-serif">2025.12.31</div>
<div class="t" style="left:86px;top:229px;height:14px;line-height:14px;font-size:11px;color:#f00c0c;font-family:'Liberation Sans','Noto Sans CJK SC',sans-serif">52.37</div>
<div class="t" style="left:136px;top:229px;height:14px;line-height:14px;font-size:11px;color:#f00c0c;font-family:'Liberation Sans','Noto Sans CJK SC',sans-serif">0.02 | 1.90</div>
<div class="t" style="left:206px;top:229px;height:14px;line-height:14px;font-size:11px;color:#f00c0c;font-family:'Liberation Sans','Noto Sans CJK SC',sans-serif">1340</div>
<div class="t" style="left:246px;top:229px;height:14px;line-height:14px;font-size:11px;color:#f00c0c;font-family:'Liberation Sans','Noto Sans CJK SC',sans-serif">2724.78</div>
<div class="t" style="left:326px;top:229px;height:14px;line-height:14px;font-size:11px;color:#f00c0c;font-family:'Liberation Sans','Noto Sans CJK SC',sans-serif">7.64 %</div>
<div class="t" style="left:386px;top:229px;height:14px;line-height:14px;font-size:11px;color:#c4ccdc;font-family:'Liberation Sans','Noto Sans CJK SC',sans-serif">0</div>
<div class="t" style="left:446px;top:229px;height:14px;line-height:14px;font-size:11px;color:#c4ccdc;font-family:'Liberation Sans','Noto Sans CJK SC',sans-serif">38402.38</div>
<div class="t" style="left:6px;top:243px;height:14px;line-height:14px;font-size:11px;color:#c4ccdc;font-family:'Liberation Sans','Noto Sans CJK SC',sans-serif">2025.12.30</div>
<div class="t" style="left:86px;top:243px;height:14px;line-height:14px;font-size:11px;color:#f00c0c;font-family:'Liberation Sans','Noto Sans CJK SC',sans-serif">31.49</div>
<div class="t" style="left:136px;top:243px;height:14px;line-height:14px;font-size:11px;color:#f00c0c;font-family:'Liberation Sans','Noto Sans CJK SC',sans-serif">0.02 | 0.44</div>
<div class="t" style="left:206px;top:243px;height:14px;line-height:14px;font-size:11px;color:#f00c0c;font-family:'Liberation Sans','Noto Sans CJK SC',sans-serif">1101</div>
<div class="t" style="left:246px;top:243px;height:14px;line-height:14px;font-size:11px;color:#f00c0c;font-family:'Liberation Sans','Noto Sans CJK SC',sans-serif">1626.78</div>
<div class="t" style="left:326px;top:243px;height:14px;line-height:14px;font-size:11px;color:#f00c0c;font-family:'Liberation Sans','Noto Sans CJK SC',sans-serif">4.78 %</div>
<div class="t" style="left:386px;top:243px;height:14px;line-height:14px;font-size:11px;color:#c4ccdc;font-family:'Liberation Sans','Noto Sans CJK SC',sans-serif">0</div>
<div class="t" style="left:446px;top:243px;height:14px;line-height:14px;font-size:11px;color:#c4ccdc;font-family:'Liberation Sans','Noto Sans CJK SC',sans-serif">35677.60</div>
<div class="t" style="left:6px;top:257px;height:14px;line-height:14px;font-size:11px;color:#c4ccdc;font-family:'Liberation Sans','Noto Sans CJK SC',sans-serif">2025.12.29</div>
<div class="t" style="left:86px;top:257px;height:14px;line-height:14px;font-size:11px;color:#f00c0c;font-family:'Liberation Sans','Noto Sans CJK SC',sans-serif">49.96</div>
<div class="t" style="left:136px;top:257px;height:14px;line-height:14px;font-size:11px;color:#f00c0c;font-family:'Liberation Sans','Noto Sans CJK SC',sans-serif">0.02 | 0.92</div>
<div class="t" style="left:206px;top:257px;height:14px;line-height:14px;font-size:11px;color:#f00c0c;font-family:'Liberation Sans','Noto Sans CJK SC',sans-serif">1399</div>
<div class="t" style="left:246px;top:257px;height:14px;line-height:14px;font-size:11px;color:#f00c0c;font-family:'Liberation Sans','Noto Sans CJK SC',sans-serif">4050.82</div>
<div class="t" style="left:326px;top:257px;height:14px;line-height:14px;font-size:11px;color:#f00c0c;font-family:'Liberation Sans','Noto Sans CJK SC',sans-serif">13.50 %</div>
<div class="t" style="left:386px;top:257px;height:14px;line-height:14px;font-size:11px;color:#c4ccdc;font-family:'Liberation Sans','Noto Sans CJK SC',sans-serif">0</div>
<div class="t" style="left:446px;top:257px;height:14px;line-height:14px;font-size:11px;color:#c4ccdc;font-family:'Liberation Sans','Noto Sans CJK SC',sans-serif">34050.82</div>
<div class="t" style="left:6px;top:271px;height:14px;line-height:14px;font-size:11px;color:#c4ccdc;font-family:'Liberation Sans','Noto Sans CJK SC',sans-serif">2025.12.28</div>
<div class="t" style="left:86px;top:271px;height:14px;line-height:14px;font-size:11px;color:#c4ccdc;font-family:'Liberation Sans','Noto Sans CJK SC',sans-serif">0.00</div>
<div class="t" style="left:136px;top:271px;height:14px;line-height:14px;font-size:11px;color:#c4ccdc;font-family:'Liberation Sans','Noto Sans CJK SC',sans-serif">0.00 | 0.00</div>
<div class="t" style="left:206px;top:271px;height:14px;line-height:14px;font-size:11px;color:#c4ccdc;font-family:'Liberation Sans','Noto Sans CJK SC',sans-serif">0</div>
<div class="t" style="left:246px;top:271px;height:14px;line-height:14px;font-size:11px;color:#c4ccdc;font-family:'Liberation Sans','Noto Sans CJK SC',sans-serif">0.00</div>
<div class="t" style="left:326px;top:271px;height:14px;line-height:14px;font-size:11px;color:#c4ccdc;font-family:'Liberation Sans','Noto Sans CJK SC',sans-serif">0.00 %</div>
<div class="t" style="left:386px;top:271px;height:14px;line-height:14px;font-size:11px;color:#f00c0c;font-family:'Liberation Sans','Noto Sans CJK SC',sans-serif">30000</div>
<div class="t" style="left:446px;top:271px;height:14px;line-height:14px;font-size:11px;color:#c4ccdc;font-family:'Liberation Sans','Noto Sans CJK SC',sans-serif">30000.00</div>
<div class="t" style="left:6px;top:285px;height:14px;line-height:14px;font-size:11px;color:#c4ccdc;font-family:'Liberation Sans','Noto Sans CJK SC',sans-serif">2025.12.26</div>
<div class="t" style="left:86px;top:285px;height:14px;line-height:14px;font-size:11px;color:#00ecec;font-family:'Liberation Sans','Noto Sans CJK SC',sans-serif">33.43</div>
<div class="t" style="left:136px;top:285px;height:14px;line-height:14px;font-size:11px;color:#00ecec;font-family:'Liberation Sans','Noto Sans CJK SC',sans-serif">0.02 | 5.00</div>
<div class="t" style="left:206px;top:285px;height:14px;line-height:14px;font-size:11px;color:#00ecec;font-family:'Liberation Sans','Noto Sans CJK SC',sans-serif">220</div>
<div class="t" style="left:246px;top:285px;height:14px;line-height:14px;font-size:11px;color:#00ecec;font-family:'Liberation Sans','Noto Sans CJK SC',sans-serif">-27688.53</div>
<div class="t" style="left:326px;top:285px;height:14px;line-height:14px;font-size:11px;color:#00ecec;font-family:'Liberation Sans','Noto Sans CJK SC',sans-serif">-100.00 %</div>
<div class="t" style="left:386px;top:285px;height:14px;line-height:14px;font-size:11px;color:#f00c0c;font-family:'Liberation Sans','Noto Sans CJK SC',sans-serif">-1000.58</div>
<div class="t" style="left:446px;top:285px;height:14px;line-height:14px;font-size:11px;color:#c4ccdc;font-family:'Liberation Sans','Noto Sans CJK SC',sans-serif">0.00</div>
</div>
<div style="left:860px;top:483px;width:2px;height:376px;background:#0f3f9f;"></div>
<div style="left:36px;top:482px;width:826px;height:1px;background:#1b3a7a;"></div>
<div class="t m" style="left:618px;top:599px;height:18px;line-height:18px;font-size:13px;color:#e00000;letter-spacing:1px"><span class="c">多单单数:</span><span class="l">&nbsp;2</span></div>
<div style="left:618px;top:568px;width:110px;height:5px;overflow:hidden"><div class="t m" style="left:0;top:-9px;height:18px;line-height:18px;font-size:13px;color:#e00000;letter-spacing:1px"><span class="c">多单手数:</span><span class="l">&nbsp;0.04</span></div></div>
<svg style="left:648px;top:568px" width="12" height="6"><path d="M0 0h11l-5.5 5.5z" fill="#9aa4b4"/></svg>
<div style="left:808px;top:576px;width:4px;height:1px;background:#fff;"></div>
<div class="t" style="left:813px;top:570.5px;height:12px;line-height:12px;font-size:10.3px;color:#fff;font-family:'Liberation Sans','Noto Sans CJK SC',sans-serif;letter-spacing:0px;transform-origin:0 50%;transform:scaleX(0.86);">4414.40</div>
<div style="left:808px;top:608px;width:4px;height:1px;background:#fff;"></div>
<div class="t" style="left:813px;top:602.5px;height:12px;line-height:12px;font-size:10.3px;color:#fff;font-family:'Liberation Sans','Noto Sans CJK SC',sans-serif;letter-spacing:0px;transform-origin:0 50%;transform:scaleX(0.86);">4412.25</div>
<div style="left:808px;top:640px;width:4px;height:1px;background:#fff;"></div>
<div class="t" style="left:813px;top:634.5px;height:12px;line-height:12px;font-size:10.3px;color:#fff;font-family:'Liberation Sans','Noto Sans CJK SC',sans-serif;letter-spacing:0px;transform-origin:0 50%;transform:scaleX(0.86);">4410.10</div>
<div style="left:808px;top:672px;width:4px;height:1px;background:#fff;"></div>
<div class="t" style="left:813px;top:666.5px;height:12px;line-height:12px;font-size:10.3px;color:#fff;font-family:'Liberation Sans','Noto Sans CJK SC',sans-serif;letter-spacing:0px;transform-origin:0 50%;transform:scaleX(0.86);">4407.95</div>
<div style="left:808px;top:736px;width:4px;height:1px;background:#fff;"></div>
<div class="t" style="left:813px;top:730.5px;height:12px;line-height:12px;font-size:10.3px;color:#fff;font-family:'Liberation Sans','Noto Sans CJK SC',sans-serif;letter-spacing:0px;transform-origin:0 50%;transform:scaleX(0.86);">4403.65</div>
<div style="left:808px;top:768px;width:4px;height:1px;background:#fff;"></div>
<div class="t" style="left:813px;top:762.5px;height:12px;line-height:12px;font-size:10.3px;color:#fff;font-family:'Liberation Sans','Noto Sans CJK SC',sans-serif;letter-spacing:0px;transform-origin:0 50%;transform:scaleX(0.86);">4401.50</div>
<div style="left:808px;top:800px;width:4px;height:1px;background:#fff;"></div>
<div class="t" style="left:813px;top:794.5px;height:12px;line-height:12px;font-size:10.3px;color:#fff;font-family:'Liberation Sans','Noto Sans CJK SC',sans-serif;letter-spacing:0px;transform-origin:0 50%;transform:scaleX(0.86);">4399.35</div>
<div style="left:808px;top:832px;width:4px;height:1px;background:#fff;"></div>
<div class="t" style="left:813px;top:826.5px;height:12px;line-height:12px;font-size:10.3px;color:#fff;font-family:'Liberation Sans','Noto Sans CJK SC',sans-serif;letter-spacing:0px;transform-origin:0 50%;transform:scaleX(0.86);">4397.20</div>
<div style="left:810px;top:698px;width:39px;height:10px;background:#8c9bb0;"></div>
<div class="t k" style="left:813px;top:697.5px;height:12px;line-height:12px;font-size:10.3px;color:#000;font-family:'Liberation Sans','Noto Sans CJK SC',sans-serif;letter-spacing:0px;transform-origin:0 50%;transform:scaleX(0.86);">4405.86</div>
</div></body></html>
